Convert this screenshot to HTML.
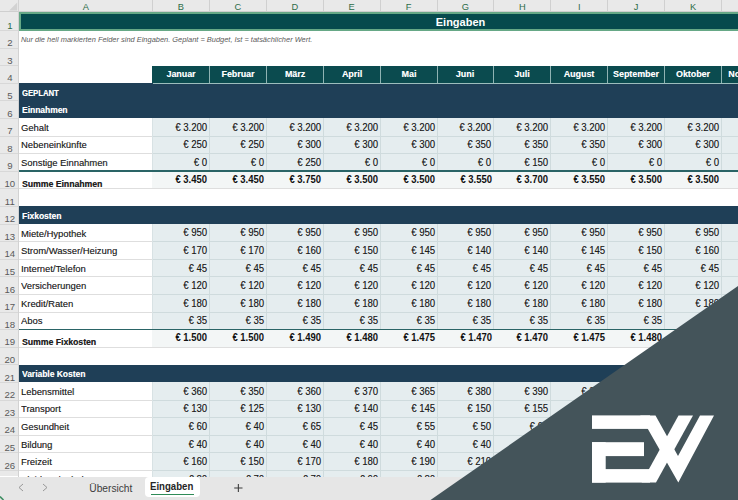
<!DOCTYPE html>
<html><head><meta charset="utf-8"><style>
html,body{margin:0;padding:0;width:738px;height:500px;overflow:hidden;background:#fff}
body{position:relative;font-family:"Liberation Sans",sans-serif}
body>div,body>svg{position:absolute}
</style></head><body>
<div style="left:0.00px;top:0.00px;width:738.00px;height:12.00px;background:#E9E9E9;"></div>
<div style="left:0.00px;top:0.00px;width:19.00px;height:476.00px;background:#E9E9E9;"></div>
<div style="left:19.00px;top:12.00px;width:719.00px;height:19.00px;background:#064A4D;"></div>
<div style="left:152.00px;top:66.00px;width:586.00px;height:17.00px;background:#0B4B4F;"></div>
<div style="left:19.00px;top:83.00px;width:719.00px;height:18.00px;background:#1F3F57;"></div>
<div style="left:19.00px;top:101.00px;width:719.00px;height:17.00px;background:#1F3F57;"></div>
<div style="left:19.00px;top:206.00px;width:719.00px;height:18.00px;background:#1F3F57;"></div>
<div style="left:19.00px;top:365.00px;width:719.00px;height:17.00px;background:#1F3F57;"></div>
<div style="left:152.00px;top:118.00px;width:586.00px;height:18.00px;background:#E5EDEF;"></div>
<div style="left:152.00px;top:136.00px;width:586.00px;height:18.00px;background:#E5EDEF;"></div>
<div style="left:152.00px;top:154.00px;width:586.00px;height:17.00px;background:#E5EDEF;"></div>
<div style="left:152.00px;top:171.00px;width:586.00px;height:18.00px;background:#F3F6F6;"></div>
<div style="left:152.00px;top:224.00px;width:586.00px;height:18.00px;background:#E5EDEF;"></div>
<div style="left:152.00px;top:242.00px;width:586.00px;height:17.00px;background:#E5EDEF;"></div>
<div style="left:152.00px;top:259.00px;width:586.00px;height:18.00px;background:#E5EDEF;"></div>
<div style="left:152.00px;top:277.00px;width:586.00px;height:17.00px;background:#E5EDEF;"></div>
<div style="left:152.00px;top:294.00px;width:586.00px;height:18.00px;background:#E5EDEF;"></div>
<div style="left:152.00px;top:312.00px;width:586.00px;height:18.00px;background:#E5EDEF;"></div>
<div style="left:152.00px;top:330.00px;width:586.00px;height:17.00px;background:#F3F6F6;"></div>
<div style="left:152.00px;top:382.00px;width:586.00px;height:18.00px;background:#E5EDEF;"></div>
<div style="left:152.00px;top:400.00px;width:586.00px;height:18.00px;background:#E5EDEF;"></div>
<div style="left:152.00px;top:418.00px;width:586.00px;height:17.00px;background:#E5EDEF;"></div>
<div style="left:152.00px;top:435.00px;width:586.00px;height:18.00px;background:#E5EDEF;"></div>
<div style="left:152.00px;top:453.00px;width:586.00px;height:17.00px;background:#E5EDEF;"></div>
<div style="left:152.00px;top:470.00px;width:586.00px;height:18.00px;background:#E5EDEF;"></div>
<div style="left:152.00px;top:0.00px;width:1.00px;height:12.00px;background:#D0D0D0;"></div>
<div style="left:208.90px;top:0.00px;width:1.00px;height:12.00px;background:#D0D0D0;"></div>
<div style="left:265.80px;top:0.00px;width:1.00px;height:12.00px;background:#D0D0D0;"></div>
<div style="left:322.70px;top:0.00px;width:1.00px;height:12.00px;background:#D0D0D0;"></div>
<div style="left:379.60px;top:0.00px;width:1.00px;height:12.00px;background:#D0D0D0;"></div>
<div style="left:436.50px;top:0.00px;width:1.00px;height:12.00px;background:#D0D0D0;"></div>
<div style="left:493.40px;top:0.00px;width:1.00px;height:12.00px;background:#D0D0D0;"></div>
<div style="left:550.30px;top:0.00px;width:1.00px;height:12.00px;background:#D0D0D0;"></div>
<div style="left:607.20px;top:0.00px;width:1.00px;height:12.00px;background:#D0D0D0;"></div>
<div style="left:664.10px;top:0.00px;width:1.00px;height:12.00px;background:#D0D0D0;"></div>
<div style="left:721.00px;top:0.00px;width:1.00px;height:12.00px;background:#D0D0D0;"></div>
<div style="left:777.90px;top:0.00px;width:1.00px;height:12.00px;background:#D0D0D0;"></div>
<div style="left:0.00px;top:11.40px;width:738.00px;height:1.00px;background:#CFCFCF;"></div>
<div style="left:18.00px;top:0.00px;width:1.00px;height:476.50px;background:#D2D2D2;"></div>
<div style="left:0.00px;top:29.90px;width:18.40px;height:0.80px;background:#D8D8D8;"></div>
<div style="left:0.00px;top:47.50px;width:18.40px;height:0.80px;background:#D8D8D8;"></div>
<div style="left:0.00px;top:65.10px;width:18.40px;height:0.80px;background:#D8D8D8;"></div>
<div style="left:0.00px;top:82.70px;width:18.40px;height:0.80px;background:#D8D8D8;"></div>
<div style="left:0.00px;top:100.30px;width:18.40px;height:0.80px;background:#D8D8D8;"></div>
<div style="left:0.00px;top:117.90px;width:18.40px;height:0.80px;background:#D8D8D8;"></div>
<div style="left:0.00px;top:135.50px;width:18.40px;height:0.80px;background:#D8D8D8;"></div>
<div style="left:0.00px;top:153.10px;width:18.40px;height:0.80px;background:#D8D8D8;"></div>
<div style="left:0.00px;top:170.70px;width:18.40px;height:0.80px;background:#D8D8D8;"></div>
<div style="left:0.00px;top:188.30px;width:18.40px;height:0.80px;background:#D8D8D8;"></div>
<div style="left:0.00px;top:205.90px;width:18.40px;height:0.80px;background:#D8D8D8;"></div>
<div style="left:0.00px;top:223.50px;width:18.40px;height:0.80px;background:#D8D8D8;"></div>
<div style="left:0.00px;top:241.10px;width:18.40px;height:0.80px;background:#D8D8D8;"></div>
<div style="left:0.00px;top:258.70px;width:18.40px;height:0.80px;background:#D8D8D8;"></div>
<div style="left:0.00px;top:276.30px;width:18.40px;height:0.80px;background:#D8D8D8;"></div>
<div style="left:0.00px;top:293.90px;width:18.40px;height:0.80px;background:#D8D8D8;"></div>
<div style="left:0.00px;top:311.50px;width:18.40px;height:0.80px;background:#D8D8D8;"></div>
<div style="left:0.00px;top:329.10px;width:18.40px;height:0.80px;background:#D8D8D8;"></div>
<div style="left:0.00px;top:346.70px;width:18.40px;height:0.80px;background:#D8D8D8;"></div>
<div style="left:0.00px;top:364.30px;width:18.40px;height:0.80px;background:#D8D8D8;"></div>
<div style="left:0.00px;top:381.90px;width:18.40px;height:0.80px;background:#D8D8D8;"></div>
<div style="left:0.00px;top:399.50px;width:18.40px;height:0.80px;background:#D8D8D8;"></div>
<div style="left:0.00px;top:417.10px;width:18.40px;height:0.80px;background:#D8D8D8;"></div>
<div style="left:0.00px;top:434.70px;width:18.40px;height:0.80px;background:#D8D8D8;"></div>
<div style="left:0.00px;top:452.30px;width:18.40px;height:0.80px;background:#D8D8D8;"></div>
<div style="left:0.00px;top:469.90px;width:18.40px;height:0.80px;background:#D8D8D8;"></div>
<div style="left:0.00px;top:487.50px;width:18.40px;height:0.80px;background:#D8D8D8;"></div>
<div style="left:208.90px;top:65.60px;width:1.00px;height:17.60px;background:#8FB3B3;"></div>
<div style="left:265.80px;top:65.60px;width:1.00px;height:17.60px;background:#8FB3B3;"></div>
<div style="left:322.70px;top:65.60px;width:1.00px;height:17.60px;background:#8FB3B3;"></div>
<div style="left:379.60px;top:65.60px;width:1.00px;height:17.60px;background:#8FB3B3;"></div>
<div style="left:436.50px;top:65.60px;width:1.00px;height:17.60px;background:#8FB3B3;"></div>
<div style="left:493.40px;top:65.60px;width:1.00px;height:17.60px;background:#8FB3B3;"></div>
<div style="left:550.30px;top:65.60px;width:1.00px;height:17.60px;background:#8FB3B3;"></div>
<div style="left:607.20px;top:65.60px;width:1.00px;height:17.60px;background:#8FB3B3;"></div>
<div style="left:664.10px;top:65.60px;width:1.00px;height:17.60px;background:#8FB3B3;"></div>
<div style="left:721.00px;top:65.60px;width:1.00px;height:17.60px;background:#8FB3B3;"></div>
<div style="left:777.90px;top:65.60px;width:1.00px;height:17.60px;background:#8FB3B3;"></div>
<div style="left:152.50px;top:82.60px;width:585.50px;height:1.00px;background:#9DBDBD;"></div>
<div style="left:19.40px;top:135.50px;width:133.10px;height:1.00px;background:#DEDEDE;"></div>
<div style="left:152.50px;top:135.50px;width:585.50px;height:1.00px;background:#CFDBDD;"></div>
<div style="left:208.90px;top:118.40px;width:1.00px;height:17.60px;background:#CFDBDD;"></div>
<div style="left:265.80px;top:118.40px;width:1.00px;height:17.60px;background:#CFDBDD;"></div>
<div style="left:322.70px;top:118.40px;width:1.00px;height:17.60px;background:#CFDBDD;"></div>
<div style="left:379.60px;top:118.40px;width:1.00px;height:17.60px;background:#CFDBDD;"></div>
<div style="left:436.50px;top:118.40px;width:1.00px;height:17.60px;background:#CFDBDD;"></div>
<div style="left:493.40px;top:118.40px;width:1.00px;height:17.60px;background:#CFDBDD;"></div>
<div style="left:550.30px;top:118.40px;width:1.00px;height:17.60px;background:#CFDBDD;"></div>
<div style="left:607.20px;top:118.40px;width:1.00px;height:17.60px;background:#CFDBDD;"></div>
<div style="left:664.10px;top:118.40px;width:1.00px;height:17.60px;background:#CFDBDD;"></div>
<div style="left:721.00px;top:118.40px;width:1.00px;height:17.60px;background:#CFDBDD;"></div>
<div style="left:777.90px;top:118.40px;width:1.00px;height:17.60px;background:#CFDBDD;"></div>
<div style="left:152.00px;top:118.40px;width:1.00px;height:17.60px;background:#D8E2E4;"></div>
<div style="left:19.40px;top:153.10px;width:133.10px;height:1.00px;background:#DEDEDE;"></div>
<div style="left:152.50px;top:153.10px;width:585.50px;height:1.00px;background:#CFDBDD;"></div>
<div style="left:208.90px;top:136.00px;width:1.00px;height:17.60px;background:#CFDBDD;"></div>
<div style="left:265.80px;top:136.00px;width:1.00px;height:17.60px;background:#CFDBDD;"></div>
<div style="left:322.70px;top:136.00px;width:1.00px;height:17.60px;background:#CFDBDD;"></div>
<div style="left:379.60px;top:136.00px;width:1.00px;height:17.60px;background:#CFDBDD;"></div>
<div style="left:436.50px;top:136.00px;width:1.00px;height:17.60px;background:#CFDBDD;"></div>
<div style="left:493.40px;top:136.00px;width:1.00px;height:17.60px;background:#CFDBDD;"></div>
<div style="left:550.30px;top:136.00px;width:1.00px;height:17.60px;background:#CFDBDD;"></div>
<div style="left:607.20px;top:136.00px;width:1.00px;height:17.60px;background:#CFDBDD;"></div>
<div style="left:664.10px;top:136.00px;width:1.00px;height:17.60px;background:#CFDBDD;"></div>
<div style="left:721.00px;top:136.00px;width:1.00px;height:17.60px;background:#CFDBDD;"></div>
<div style="left:777.90px;top:136.00px;width:1.00px;height:17.60px;background:#CFDBDD;"></div>
<div style="left:152.00px;top:136.00px;width:1.00px;height:17.60px;background:#D8E2E4;"></div>
<div style="left:19.40px;top:170.70px;width:133.10px;height:1.00px;background:#DEDEDE;"></div>
<div style="left:152.50px;top:170.70px;width:585.50px;height:1.00px;background:#CFDBDD;"></div>
<div style="left:208.90px;top:153.60px;width:1.00px;height:17.60px;background:#CFDBDD;"></div>
<div style="left:265.80px;top:153.60px;width:1.00px;height:17.60px;background:#CFDBDD;"></div>
<div style="left:322.70px;top:153.60px;width:1.00px;height:17.60px;background:#CFDBDD;"></div>
<div style="left:379.60px;top:153.60px;width:1.00px;height:17.60px;background:#CFDBDD;"></div>
<div style="left:436.50px;top:153.60px;width:1.00px;height:17.60px;background:#CFDBDD;"></div>
<div style="left:493.40px;top:153.60px;width:1.00px;height:17.60px;background:#CFDBDD;"></div>
<div style="left:550.30px;top:153.60px;width:1.00px;height:17.60px;background:#CFDBDD;"></div>
<div style="left:607.20px;top:153.60px;width:1.00px;height:17.60px;background:#CFDBDD;"></div>
<div style="left:664.10px;top:153.60px;width:1.00px;height:17.60px;background:#CFDBDD;"></div>
<div style="left:721.00px;top:153.60px;width:1.00px;height:17.60px;background:#CFDBDD;"></div>
<div style="left:777.90px;top:153.60px;width:1.00px;height:17.60px;background:#CFDBDD;"></div>
<div style="left:152.00px;top:153.60px;width:1.00px;height:17.60px;background:#D8E2E4;"></div>
<div style="left:19.40px;top:170.40px;width:718.60px;height:1.60px;background:#2A6466;"></div>
<div style="left:19.40px;top:188.20px;width:718.60px;height:1.20px;background:#DEDEDE;"></div>
<div style="left:19.40px;top:241.10px;width:133.10px;height:1.00px;background:#DEDEDE;"></div>
<div style="left:152.50px;top:241.10px;width:585.50px;height:1.00px;background:#CFDBDD;"></div>
<div style="left:208.90px;top:224.00px;width:1.00px;height:17.60px;background:#CFDBDD;"></div>
<div style="left:265.80px;top:224.00px;width:1.00px;height:17.60px;background:#CFDBDD;"></div>
<div style="left:322.70px;top:224.00px;width:1.00px;height:17.60px;background:#CFDBDD;"></div>
<div style="left:379.60px;top:224.00px;width:1.00px;height:17.60px;background:#CFDBDD;"></div>
<div style="left:436.50px;top:224.00px;width:1.00px;height:17.60px;background:#CFDBDD;"></div>
<div style="left:493.40px;top:224.00px;width:1.00px;height:17.60px;background:#CFDBDD;"></div>
<div style="left:550.30px;top:224.00px;width:1.00px;height:17.60px;background:#CFDBDD;"></div>
<div style="left:607.20px;top:224.00px;width:1.00px;height:17.60px;background:#CFDBDD;"></div>
<div style="left:664.10px;top:224.00px;width:1.00px;height:17.60px;background:#CFDBDD;"></div>
<div style="left:721.00px;top:224.00px;width:1.00px;height:17.60px;background:#CFDBDD;"></div>
<div style="left:777.90px;top:224.00px;width:1.00px;height:17.60px;background:#CFDBDD;"></div>
<div style="left:152.00px;top:224.00px;width:1.00px;height:17.60px;background:#D8E2E4;"></div>
<div style="left:19.40px;top:258.70px;width:133.10px;height:1.00px;background:#DEDEDE;"></div>
<div style="left:152.50px;top:258.70px;width:585.50px;height:1.00px;background:#CFDBDD;"></div>
<div style="left:208.90px;top:241.60px;width:1.00px;height:17.60px;background:#CFDBDD;"></div>
<div style="left:265.80px;top:241.60px;width:1.00px;height:17.60px;background:#CFDBDD;"></div>
<div style="left:322.70px;top:241.60px;width:1.00px;height:17.60px;background:#CFDBDD;"></div>
<div style="left:379.60px;top:241.60px;width:1.00px;height:17.60px;background:#CFDBDD;"></div>
<div style="left:436.50px;top:241.60px;width:1.00px;height:17.60px;background:#CFDBDD;"></div>
<div style="left:493.40px;top:241.60px;width:1.00px;height:17.60px;background:#CFDBDD;"></div>
<div style="left:550.30px;top:241.60px;width:1.00px;height:17.60px;background:#CFDBDD;"></div>
<div style="left:607.20px;top:241.60px;width:1.00px;height:17.60px;background:#CFDBDD;"></div>
<div style="left:664.10px;top:241.60px;width:1.00px;height:17.60px;background:#CFDBDD;"></div>
<div style="left:721.00px;top:241.60px;width:1.00px;height:17.60px;background:#CFDBDD;"></div>
<div style="left:777.90px;top:241.60px;width:1.00px;height:17.60px;background:#CFDBDD;"></div>
<div style="left:152.00px;top:241.60px;width:1.00px;height:17.60px;background:#D8E2E4;"></div>
<div style="left:19.40px;top:276.30px;width:133.10px;height:1.00px;background:#DEDEDE;"></div>
<div style="left:152.50px;top:276.30px;width:585.50px;height:1.00px;background:#CFDBDD;"></div>
<div style="left:208.90px;top:259.20px;width:1.00px;height:17.60px;background:#CFDBDD;"></div>
<div style="left:265.80px;top:259.20px;width:1.00px;height:17.60px;background:#CFDBDD;"></div>
<div style="left:322.70px;top:259.20px;width:1.00px;height:17.60px;background:#CFDBDD;"></div>
<div style="left:379.60px;top:259.20px;width:1.00px;height:17.60px;background:#CFDBDD;"></div>
<div style="left:436.50px;top:259.20px;width:1.00px;height:17.60px;background:#CFDBDD;"></div>
<div style="left:493.40px;top:259.20px;width:1.00px;height:17.60px;background:#CFDBDD;"></div>
<div style="left:550.30px;top:259.20px;width:1.00px;height:17.60px;background:#CFDBDD;"></div>
<div style="left:607.20px;top:259.20px;width:1.00px;height:17.60px;background:#CFDBDD;"></div>
<div style="left:664.10px;top:259.20px;width:1.00px;height:17.60px;background:#CFDBDD;"></div>
<div style="left:721.00px;top:259.20px;width:1.00px;height:17.60px;background:#CFDBDD;"></div>
<div style="left:777.90px;top:259.20px;width:1.00px;height:17.60px;background:#CFDBDD;"></div>
<div style="left:152.00px;top:259.20px;width:1.00px;height:17.60px;background:#D8E2E4;"></div>
<div style="left:19.40px;top:293.90px;width:133.10px;height:1.00px;background:#DEDEDE;"></div>
<div style="left:152.50px;top:293.90px;width:585.50px;height:1.00px;background:#CFDBDD;"></div>
<div style="left:208.90px;top:276.80px;width:1.00px;height:17.60px;background:#CFDBDD;"></div>
<div style="left:265.80px;top:276.80px;width:1.00px;height:17.60px;background:#CFDBDD;"></div>
<div style="left:322.70px;top:276.80px;width:1.00px;height:17.60px;background:#CFDBDD;"></div>
<div style="left:379.60px;top:276.80px;width:1.00px;height:17.60px;background:#CFDBDD;"></div>
<div style="left:436.50px;top:276.80px;width:1.00px;height:17.60px;background:#CFDBDD;"></div>
<div style="left:493.40px;top:276.80px;width:1.00px;height:17.60px;background:#CFDBDD;"></div>
<div style="left:550.30px;top:276.80px;width:1.00px;height:17.60px;background:#CFDBDD;"></div>
<div style="left:607.20px;top:276.80px;width:1.00px;height:17.60px;background:#CFDBDD;"></div>
<div style="left:664.10px;top:276.80px;width:1.00px;height:17.60px;background:#CFDBDD;"></div>
<div style="left:721.00px;top:276.80px;width:1.00px;height:17.60px;background:#CFDBDD;"></div>
<div style="left:777.90px;top:276.80px;width:1.00px;height:17.60px;background:#CFDBDD;"></div>
<div style="left:152.00px;top:276.80px;width:1.00px;height:17.60px;background:#D8E2E4;"></div>
<div style="left:19.40px;top:311.50px;width:133.10px;height:1.00px;background:#DEDEDE;"></div>
<div style="left:152.50px;top:311.50px;width:585.50px;height:1.00px;background:#CFDBDD;"></div>
<div style="left:208.90px;top:294.40px;width:1.00px;height:17.60px;background:#CFDBDD;"></div>
<div style="left:265.80px;top:294.40px;width:1.00px;height:17.60px;background:#CFDBDD;"></div>
<div style="left:322.70px;top:294.40px;width:1.00px;height:17.60px;background:#CFDBDD;"></div>
<div style="left:379.60px;top:294.40px;width:1.00px;height:17.60px;background:#CFDBDD;"></div>
<div style="left:436.50px;top:294.40px;width:1.00px;height:17.60px;background:#CFDBDD;"></div>
<div style="left:493.40px;top:294.40px;width:1.00px;height:17.60px;background:#CFDBDD;"></div>
<div style="left:550.30px;top:294.40px;width:1.00px;height:17.60px;background:#CFDBDD;"></div>
<div style="left:607.20px;top:294.40px;width:1.00px;height:17.60px;background:#CFDBDD;"></div>
<div style="left:664.10px;top:294.40px;width:1.00px;height:17.60px;background:#CFDBDD;"></div>
<div style="left:721.00px;top:294.40px;width:1.00px;height:17.60px;background:#CFDBDD;"></div>
<div style="left:777.90px;top:294.40px;width:1.00px;height:17.60px;background:#CFDBDD;"></div>
<div style="left:152.00px;top:294.40px;width:1.00px;height:17.60px;background:#D8E2E4;"></div>
<div style="left:19.40px;top:329.10px;width:133.10px;height:1.00px;background:#DEDEDE;"></div>
<div style="left:152.50px;top:329.10px;width:585.50px;height:1.00px;background:#CFDBDD;"></div>
<div style="left:208.90px;top:312.00px;width:1.00px;height:17.60px;background:#CFDBDD;"></div>
<div style="left:265.80px;top:312.00px;width:1.00px;height:17.60px;background:#CFDBDD;"></div>
<div style="left:322.70px;top:312.00px;width:1.00px;height:17.60px;background:#CFDBDD;"></div>
<div style="left:379.60px;top:312.00px;width:1.00px;height:17.60px;background:#CFDBDD;"></div>
<div style="left:436.50px;top:312.00px;width:1.00px;height:17.60px;background:#CFDBDD;"></div>
<div style="left:493.40px;top:312.00px;width:1.00px;height:17.60px;background:#CFDBDD;"></div>
<div style="left:550.30px;top:312.00px;width:1.00px;height:17.60px;background:#CFDBDD;"></div>
<div style="left:607.20px;top:312.00px;width:1.00px;height:17.60px;background:#CFDBDD;"></div>
<div style="left:664.10px;top:312.00px;width:1.00px;height:17.60px;background:#CFDBDD;"></div>
<div style="left:721.00px;top:312.00px;width:1.00px;height:17.60px;background:#CFDBDD;"></div>
<div style="left:777.90px;top:312.00px;width:1.00px;height:17.60px;background:#CFDBDD;"></div>
<div style="left:152.00px;top:312.00px;width:1.00px;height:17.60px;background:#D8E2E4;"></div>
<div style="left:19.40px;top:328.80px;width:718.60px;height:1.60px;background:#2A6466;"></div>
<div style="left:19.40px;top:346.60px;width:718.60px;height:1.20px;background:#DEDEDE;"></div>
<div style="left:19.40px;top:399.50px;width:133.10px;height:1.00px;background:#DEDEDE;"></div>
<div style="left:152.50px;top:399.50px;width:585.50px;height:1.00px;background:#CFDBDD;"></div>
<div style="left:208.90px;top:382.40px;width:1.00px;height:17.60px;background:#CFDBDD;"></div>
<div style="left:265.80px;top:382.40px;width:1.00px;height:17.60px;background:#CFDBDD;"></div>
<div style="left:322.70px;top:382.40px;width:1.00px;height:17.60px;background:#CFDBDD;"></div>
<div style="left:379.60px;top:382.40px;width:1.00px;height:17.60px;background:#CFDBDD;"></div>
<div style="left:436.50px;top:382.40px;width:1.00px;height:17.60px;background:#CFDBDD;"></div>
<div style="left:493.40px;top:382.40px;width:1.00px;height:17.60px;background:#CFDBDD;"></div>
<div style="left:550.30px;top:382.40px;width:1.00px;height:17.60px;background:#CFDBDD;"></div>
<div style="left:607.20px;top:382.40px;width:1.00px;height:17.60px;background:#CFDBDD;"></div>
<div style="left:664.10px;top:382.40px;width:1.00px;height:17.60px;background:#CFDBDD;"></div>
<div style="left:721.00px;top:382.40px;width:1.00px;height:17.60px;background:#CFDBDD;"></div>
<div style="left:777.90px;top:382.40px;width:1.00px;height:17.60px;background:#CFDBDD;"></div>
<div style="left:152.00px;top:382.40px;width:1.00px;height:17.60px;background:#D8E2E4;"></div>
<div style="left:19.40px;top:417.10px;width:133.10px;height:1.00px;background:#DEDEDE;"></div>
<div style="left:152.50px;top:417.10px;width:585.50px;height:1.00px;background:#CFDBDD;"></div>
<div style="left:208.90px;top:400.00px;width:1.00px;height:17.60px;background:#CFDBDD;"></div>
<div style="left:265.80px;top:400.00px;width:1.00px;height:17.60px;background:#CFDBDD;"></div>
<div style="left:322.70px;top:400.00px;width:1.00px;height:17.60px;background:#CFDBDD;"></div>
<div style="left:379.60px;top:400.00px;width:1.00px;height:17.60px;background:#CFDBDD;"></div>
<div style="left:436.50px;top:400.00px;width:1.00px;height:17.60px;background:#CFDBDD;"></div>
<div style="left:493.40px;top:400.00px;width:1.00px;height:17.60px;background:#CFDBDD;"></div>
<div style="left:550.30px;top:400.00px;width:1.00px;height:17.60px;background:#CFDBDD;"></div>
<div style="left:607.20px;top:400.00px;width:1.00px;height:17.60px;background:#CFDBDD;"></div>
<div style="left:664.10px;top:400.00px;width:1.00px;height:17.60px;background:#CFDBDD;"></div>
<div style="left:721.00px;top:400.00px;width:1.00px;height:17.60px;background:#CFDBDD;"></div>
<div style="left:777.90px;top:400.00px;width:1.00px;height:17.60px;background:#CFDBDD;"></div>
<div style="left:152.00px;top:400.00px;width:1.00px;height:17.60px;background:#D8E2E4;"></div>
<div style="left:19.40px;top:434.70px;width:133.10px;height:1.00px;background:#DEDEDE;"></div>
<div style="left:152.50px;top:434.70px;width:585.50px;height:1.00px;background:#CFDBDD;"></div>
<div style="left:208.90px;top:417.60px;width:1.00px;height:17.60px;background:#CFDBDD;"></div>
<div style="left:265.80px;top:417.60px;width:1.00px;height:17.60px;background:#CFDBDD;"></div>
<div style="left:322.70px;top:417.60px;width:1.00px;height:17.60px;background:#CFDBDD;"></div>
<div style="left:379.60px;top:417.60px;width:1.00px;height:17.60px;background:#CFDBDD;"></div>
<div style="left:436.50px;top:417.60px;width:1.00px;height:17.60px;background:#CFDBDD;"></div>
<div style="left:493.40px;top:417.60px;width:1.00px;height:17.60px;background:#CFDBDD;"></div>
<div style="left:550.30px;top:417.60px;width:1.00px;height:17.60px;background:#CFDBDD;"></div>
<div style="left:607.20px;top:417.60px;width:1.00px;height:17.60px;background:#CFDBDD;"></div>
<div style="left:664.10px;top:417.60px;width:1.00px;height:17.60px;background:#CFDBDD;"></div>
<div style="left:721.00px;top:417.60px;width:1.00px;height:17.60px;background:#CFDBDD;"></div>
<div style="left:777.90px;top:417.60px;width:1.00px;height:17.60px;background:#CFDBDD;"></div>
<div style="left:152.00px;top:417.60px;width:1.00px;height:17.60px;background:#D8E2E4;"></div>
<div style="left:19.40px;top:452.30px;width:133.10px;height:1.00px;background:#DEDEDE;"></div>
<div style="left:152.50px;top:452.30px;width:585.50px;height:1.00px;background:#CFDBDD;"></div>
<div style="left:208.90px;top:435.20px;width:1.00px;height:17.60px;background:#CFDBDD;"></div>
<div style="left:265.80px;top:435.20px;width:1.00px;height:17.60px;background:#CFDBDD;"></div>
<div style="left:322.70px;top:435.20px;width:1.00px;height:17.60px;background:#CFDBDD;"></div>
<div style="left:379.60px;top:435.20px;width:1.00px;height:17.60px;background:#CFDBDD;"></div>
<div style="left:436.50px;top:435.20px;width:1.00px;height:17.60px;background:#CFDBDD;"></div>
<div style="left:493.40px;top:435.20px;width:1.00px;height:17.60px;background:#CFDBDD;"></div>
<div style="left:550.30px;top:435.20px;width:1.00px;height:17.60px;background:#CFDBDD;"></div>
<div style="left:607.20px;top:435.20px;width:1.00px;height:17.60px;background:#CFDBDD;"></div>
<div style="left:664.10px;top:435.20px;width:1.00px;height:17.60px;background:#CFDBDD;"></div>
<div style="left:721.00px;top:435.20px;width:1.00px;height:17.60px;background:#CFDBDD;"></div>
<div style="left:777.90px;top:435.20px;width:1.00px;height:17.60px;background:#CFDBDD;"></div>
<div style="left:152.00px;top:435.20px;width:1.00px;height:17.60px;background:#D8E2E4;"></div>
<div style="left:19.40px;top:469.90px;width:133.10px;height:1.00px;background:#DEDEDE;"></div>
<div style="left:152.50px;top:469.90px;width:585.50px;height:1.00px;background:#CFDBDD;"></div>
<div style="left:208.90px;top:452.80px;width:1.00px;height:17.60px;background:#CFDBDD;"></div>
<div style="left:265.80px;top:452.80px;width:1.00px;height:17.60px;background:#CFDBDD;"></div>
<div style="left:322.70px;top:452.80px;width:1.00px;height:17.60px;background:#CFDBDD;"></div>
<div style="left:379.60px;top:452.80px;width:1.00px;height:17.60px;background:#CFDBDD;"></div>
<div style="left:436.50px;top:452.80px;width:1.00px;height:17.60px;background:#CFDBDD;"></div>
<div style="left:493.40px;top:452.80px;width:1.00px;height:17.60px;background:#CFDBDD;"></div>
<div style="left:550.30px;top:452.80px;width:1.00px;height:17.60px;background:#CFDBDD;"></div>
<div style="left:607.20px;top:452.80px;width:1.00px;height:17.60px;background:#CFDBDD;"></div>
<div style="left:664.10px;top:452.80px;width:1.00px;height:17.60px;background:#CFDBDD;"></div>
<div style="left:721.00px;top:452.80px;width:1.00px;height:17.60px;background:#CFDBDD;"></div>
<div style="left:777.90px;top:452.80px;width:1.00px;height:17.60px;background:#CFDBDD;"></div>
<div style="left:152.00px;top:452.80px;width:1.00px;height:17.60px;background:#D8E2E4;"></div>
<div style="left:19.40px;top:487.50px;width:133.10px;height:1.00px;background:#DEDEDE;"></div>
<div style="left:152.50px;top:487.50px;width:585.50px;height:1.00px;background:#CFDBDD;"></div>
<div style="left:208.90px;top:470.40px;width:1.00px;height:17.60px;background:#CFDBDD;"></div>
<div style="left:265.80px;top:470.40px;width:1.00px;height:17.60px;background:#CFDBDD;"></div>
<div style="left:322.70px;top:470.40px;width:1.00px;height:17.60px;background:#CFDBDD;"></div>
<div style="left:379.60px;top:470.40px;width:1.00px;height:17.60px;background:#CFDBDD;"></div>
<div style="left:436.50px;top:470.40px;width:1.00px;height:17.60px;background:#CFDBDD;"></div>
<div style="left:493.40px;top:470.40px;width:1.00px;height:17.60px;background:#CFDBDD;"></div>
<div style="left:550.30px;top:470.40px;width:1.00px;height:17.60px;background:#CFDBDD;"></div>
<div style="left:607.20px;top:470.40px;width:1.00px;height:17.60px;background:#CFDBDD;"></div>
<div style="left:664.10px;top:470.40px;width:1.00px;height:17.60px;background:#CFDBDD;"></div>
<div style="left:721.00px;top:470.40px;width:1.00px;height:17.60px;background:#CFDBDD;"></div>
<div style="left:777.90px;top:470.40px;width:1.00px;height:17.60px;background:#CFDBDD;"></div>
<div style="left:152.00px;top:470.40px;width:1.00px;height:17.60px;background:#D8E2E4;"></div>
<div style="left:-64.05px;width:300px;text-align:center;top:-3.00px;line-height:20px;font-size:9.3px;font-weight:400;color:#2C6C48;white-space:nowrap;">A</div>
<div style="left:30.95px;width:300px;text-align:center;top:-3.00px;line-height:20px;font-size:9.3px;font-weight:400;color:#2C6C48;white-space:nowrap;">B</div>
<div style="left:87.85px;width:300px;text-align:center;top:-3.00px;line-height:20px;font-size:9.3px;font-weight:400;color:#2C6C48;white-space:nowrap;">C</div>
<div style="left:144.75px;width:300px;text-align:center;top:-3.00px;line-height:20px;font-size:9.3px;font-weight:400;color:#2C6C48;white-space:nowrap;">D</div>
<div style="left:201.65px;width:300px;text-align:center;top:-3.00px;line-height:20px;font-size:9.3px;font-weight:400;color:#2C6C48;white-space:nowrap;">E</div>
<div style="left:258.55px;width:300px;text-align:center;top:-3.00px;line-height:20px;font-size:9.3px;font-weight:400;color:#2C6C48;white-space:nowrap;">F</div>
<div style="left:315.45px;width:300px;text-align:center;top:-3.00px;line-height:20px;font-size:9.3px;font-weight:400;color:#2C6C48;white-space:nowrap;">G</div>
<div style="left:372.35px;width:300px;text-align:center;top:-3.00px;line-height:20px;font-size:9.3px;font-weight:400;color:#2C6C48;white-space:nowrap;">H</div>
<div style="left:429.25px;width:300px;text-align:center;top:-3.00px;line-height:20px;font-size:9.3px;font-weight:400;color:#2C6C48;white-space:nowrap;">I</div>
<div style="left:486.15px;width:300px;text-align:center;top:-3.00px;line-height:20px;font-size:9.3px;font-weight:400;color:#2C6C48;white-space:nowrap;">J</div>
<div style="left:543.05px;width:300px;text-align:center;top:-3.00px;line-height:20px;font-size:9.3px;font-weight:400;color:#2C6C48;white-space:nowrap;">K</div>
<div style="left:599.95px;width:300px;text-align:center;top:-3.00px;line-height:20px;font-size:9.3px;font-weight:400;color:#2C6C48;white-space:nowrap;">L</div>
<div style="left:-140.20px;width:300px;text-align:center;top:16.00px;line-height:20px;font-size:9.6px;font-weight:400;color:#2C6C48;white-space:nowrap;">1</div>
<div style="left:-140.20px;width:300px;text-align:center;top:33.00px;line-height:20px;font-size:9.6px;font-weight:400;color:#5A5A5A;white-space:nowrap;">2</div>
<div style="left:-140.20px;width:300px;text-align:center;top:51.00px;line-height:20px;font-size:9.6px;font-weight:400;color:#5A5A5A;white-space:nowrap;">3</div>
<div style="left:-140.20px;width:300px;text-align:center;top:68.00px;line-height:20px;font-size:9.6px;font-weight:400;color:#5A5A5A;white-space:nowrap;">4</div>
<div style="left:-140.20px;width:300px;text-align:center;top:86.00px;line-height:20px;font-size:9.6px;font-weight:400;color:#5A5A5A;white-space:nowrap;">5</div>
<div style="left:-140.20px;width:300px;text-align:center;top:104.00px;line-height:20px;font-size:9.6px;font-weight:400;color:#5A5A5A;white-space:nowrap;">6</div>
<div style="left:-140.20px;width:300px;text-align:center;top:121.00px;line-height:20px;font-size:9.6px;font-weight:400;color:#5A5A5A;white-space:nowrap;">7</div>
<div style="left:-140.20px;width:300px;text-align:center;top:139.00px;line-height:20px;font-size:9.6px;font-weight:400;color:#5A5A5A;white-space:nowrap;">8</div>
<div style="left:-140.20px;width:300px;text-align:center;top:156.00px;line-height:20px;font-size:9.6px;font-weight:400;color:#5A5A5A;white-space:nowrap;">9</div>
<div style="left:-140.20px;width:300px;text-align:center;top:174.00px;line-height:20px;font-size:9.6px;font-weight:400;color:#5A5A5A;white-space:nowrap;">10</div>
<div style="left:-140.20px;width:300px;text-align:center;top:192.00px;line-height:20px;font-size:9.6px;font-weight:400;color:#5A5A5A;white-space:nowrap;">11</div>
<div style="left:-140.20px;width:300px;text-align:center;top:209.00px;line-height:20px;font-size:9.6px;font-weight:400;color:#5A5A5A;white-space:nowrap;">12</div>
<div style="left:-140.20px;width:300px;text-align:center;top:227.00px;line-height:20px;font-size:9.6px;font-weight:400;color:#5A5A5A;white-space:nowrap;">13</div>
<div style="left:-140.20px;width:300px;text-align:center;top:244.00px;line-height:20px;font-size:9.6px;font-weight:400;color:#5A5A5A;white-space:nowrap;">14</div>
<div style="left:-140.20px;width:300px;text-align:center;top:262.00px;line-height:20px;font-size:9.6px;font-weight:400;color:#5A5A5A;white-space:nowrap;">15</div>
<div style="left:-140.20px;width:300px;text-align:center;top:280.00px;line-height:20px;font-size:9.6px;font-weight:400;color:#5A5A5A;white-space:nowrap;">16</div>
<div style="left:-140.20px;width:300px;text-align:center;top:297.00px;line-height:20px;font-size:9.6px;font-weight:400;color:#5A5A5A;white-space:nowrap;">17</div>
<div style="left:-140.20px;width:300px;text-align:center;top:315.00px;line-height:20px;font-size:9.6px;font-weight:400;color:#5A5A5A;white-space:nowrap;">18</div>
<div style="left:-140.20px;width:300px;text-align:center;top:332.00px;line-height:20px;font-size:9.6px;font-weight:400;color:#5A5A5A;white-space:nowrap;">19</div>
<div style="left:-140.20px;width:300px;text-align:center;top:350.00px;line-height:20px;font-size:9.6px;font-weight:400;color:#5A5A5A;white-space:nowrap;">20</div>
<div style="left:-140.20px;width:300px;text-align:center;top:368.00px;line-height:20px;font-size:9.6px;font-weight:400;color:#5A5A5A;white-space:nowrap;">21</div>
<div style="left:-140.20px;width:300px;text-align:center;top:385.00px;line-height:20px;font-size:9.6px;font-weight:400;color:#5A5A5A;white-space:nowrap;">22</div>
<div style="left:-140.20px;width:300px;text-align:center;top:403.00px;line-height:20px;font-size:9.6px;font-weight:400;color:#5A5A5A;white-space:nowrap;">23</div>
<div style="left:-140.20px;width:300px;text-align:center;top:420.00px;line-height:20px;font-size:9.6px;font-weight:400;color:#5A5A5A;white-space:nowrap;">24</div>
<div style="left:-140.20px;width:300px;text-align:center;top:438.00px;line-height:20px;font-size:9.6px;font-weight:400;color:#5A5A5A;white-space:nowrap;">25</div>
<div style="left:-140.20px;width:300px;text-align:center;top:456.00px;line-height:20px;font-size:9.6px;font-weight:400;color:#5A5A5A;white-space:nowrap;">26</div>
<div style="left:310.50px;width:300px;text-align:center;top:12.00px;line-height:20px;font-size:11.0px;font-weight:700;color:#FFFFFF;white-space:nowrap;">Eingaben</div>
<div style="left:21.00px;top:30.00px;line-height:20px;font-size:7.45px;font-weight:400;color:#5A5A5A;font-style:italic;white-space:nowrap;">Nur die hell markierten Felder sind Eingaben. Geplant = Budget, Ist = tatsächlicher Wert.</div>
<div style="left:30.95px;width:300px;text-align:center;top:64.00px;line-height:20px;font-size:9.6px;font-weight:700;color:#FFFFFF;white-space:nowrap;transform:scaleX(0.925);transform-origin:center center;text-shadow:0.3px 0 0 rgba(255,255,255,0.45);">Januar</div>
<div style="left:87.85px;width:300px;text-align:center;top:64.00px;line-height:20px;font-size:9.6px;font-weight:700;color:#FFFFFF;white-space:nowrap;transform:scaleX(0.925);transform-origin:center center;text-shadow:0.3px 0 0 rgba(255,255,255,0.45);">Februar</div>
<div style="left:144.75px;width:300px;text-align:center;top:64.00px;line-height:20px;font-size:9.6px;font-weight:700;color:#FFFFFF;white-space:nowrap;transform:scaleX(0.925);transform-origin:center center;text-shadow:0.3px 0 0 rgba(255,255,255,0.45);">März</div>
<div style="left:201.65px;width:300px;text-align:center;top:64.00px;line-height:20px;font-size:9.6px;font-weight:700;color:#FFFFFF;white-space:nowrap;transform:scaleX(0.925);transform-origin:center center;text-shadow:0.3px 0 0 rgba(255,255,255,0.45);">April</div>
<div style="left:258.55px;width:300px;text-align:center;top:64.00px;line-height:20px;font-size:9.6px;font-weight:700;color:#FFFFFF;white-space:nowrap;transform:scaleX(0.925);transform-origin:center center;text-shadow:0.3px 0 0 rgba(255,255,255,0.45);">Mai</div>
<div style="left:315.45px;width:300px;text-align:center;top:64.00px;line-height:20px;font-size:9.6px;font-weight:700;color:#FFFFFF;white-space:nowrap;transform:scaleX(0.925);transform-origin:center center;text-shadow:0.3px 0 0 rgba(255,255,255,0.45);">Juni</div>
<div style="left:372.35px;width:300px;text-align:center;top:64.00px;line-height:20px;font-size:9.6px;font-weight:700;color:#FFFFFF;white-space:nowrap;transform:scaleX(0.925);transform-origin:center center;text-shadow:0.3px 0 0 rgba(255,255,255,0.45);">Juli</div>
<div style="left:429.25px;width:300px;text-align:center;top:64.00px;line-height:20px;font-size:9.6px;font-weight:700;color:#FFFFFF;white-space:nowrap;transform:scaleX(0.925);transform-origin:center center;text-shadow:0.3px 0 0 rgba(255,255,255,0.45);">August</div>
<div style="left:486.15px;width:300px;text-align:center;top:64.00px;line-height:20px;font-size:9.6px;font-weight:700;color:#FFFFFF;white-space:nowrap;transform:scaleX(0.925);transform-origin:center center;text-shadow:0.3px 0 0 rgba(255,255,255,0.45);">September</div>
<div style="left:543.05px;width:300px;text-align:center;top:64.00px;line-height:20px;font-size:9.6px;font-weight:700;color:#FFFFFF;white-space:nowrap;transform:scaleX(0.925);transform-origin:center center;text-shadow:0.3px 0 0 rgba(255,255,255,0.45);">Oktober</div>
<div style="left:599.95px;width:300px;text-align:center;top:64.00px;line-height:20px;font-size:9.6px;font-weight:700;color:#FFFFFF;white-space:nowrap;transform:scaleX(0.925);transform-origin:center center;text-shadow:0.3px 0 0 rgba(255,255,255,0.45);">November</div>
<div style="left:21.80px;top:83.00px;line-height:20px;font-size:9.4px;font-weight:700;color:#FFFFFF;white-space:nowrap;transform:scaleX(0.820);transform-origin:left center;text-shadow:0.3px 0 0 rgba(255,255,255,0.5);">GEPLANT</div>
<div style="left:21.80px;top:100.00px;line-height:20px;font-size:9.4px;font-weight:700;color:#FFFFFF;white-space:nowrap;transform:scaleX(0.900);transform-origin:left center;text-shadow:0.3px 0 0 rgba(255,255,255,0.5);">Einnahmen</div>
<div style="left:21.80px;top:206.00px;line-height:20px;font-size:9.4px;font-weight:700;color:#FFFFFF;white-space:nowrap;transform:scaleX(0.900);transform-origin:left center;text-shadow:0.3px 0 0 rgba(255,255,255,0.5);">Fixkosten</div>
<div style="left:21.80px;top:364.00px;line-height:20px;font-size:9.4px;font-weight:700;color:#FFFFFF;white-space:nowrap;transform:scaleX(0.900);transform-origin:left center;text-shadow:0.3px 0 0 rgba(255,255,255,0.5);">Variable Kosten</div>
<div style="left:21.40px;top:118.00px;line-height:20px;font-size:9.9px;font-weight:400;color:#1E1E1E;white-space:nowrap;transform:scaleX(0.950);transform-origin:left center;text-shadow:0.35px 0 0 rgba(20,20,20,0.45);">Gehalt</div>
<div style="left:-93.10px;width:300px;text-align:right;top:118.00px;line-height:20px;font-size:10.0px;font-weight:400;color:#1E1E1E;white-space:nowrap;transform:scaleX(0.950);transform-origin:right center;text-shadow:0.35px 0 0 rgba(20,20,20,0.45);">€ 3.200</div>
<div style="left:-36.20px;width:300px;text-align:right;top:118.00px;line-height:20px;font-size:10.0px;font-weight:400;color:#1E1E1E;white-space:nowrap;transform:scaleX(0.950);transform-origin:right center;text-shadow:0.35px 0 0 rgba(20,20,20,0.45);">€ 3.200</div>
<div style="left:20.70px;width:300px;text-align:right;top:118.00px;line-height:20px;font-size:10.0px;font-weight:400;color:#1E1E1E;white-space:nowrap;transform:scaleX(0.950);transform-origin:right center;text-shadow:0.35px 0 0 rgba(20,20,20,0.45);">€ 3.200</div>
<div style="left:77.60px;width:300px;text-align:right;top:118.00px;line-height:20px;font-size:10.0px;font-weight:400;color:#1E1E1E;white-space:nowrap;transform:scaleX(0.950);transform-origin:right center;text-shadow:0.35px 0 0 rgba(20,20,20,0.45);">€ 3.200</div>
<div style="left:134.50px;width:300px;text-align:right;top:118.00px;line-height:20px;font-size:10.0px;font-weight:400;color:#1E1E1E;white-space:nowrap;transform:scaleX(0.950);transform-origin:right center;text-shadow:0.35px 0 0 rgba(20,20,20,0.45);">€ 3.200</div>
<div style="left:191.40px;width:300px;text-align:right;top:118.00px;line-height:20px;font-size:10.0px;font-weight:400;color:#1E1E1E;white-space:nowrap;transform:scaleX(0.950);transform-origin:right center;text-shadow:0.35px 0 0 rgba(20,20,20,0.45);">€ 3.200</div>
<div style="left:248.30px;width:300px;text-align:right;top:118.00px;line-height:20px;font-size:10.0px;font-weight:400;color:#1E1E1E;white-space:nowrap;transform:scaleX(0.950);transform-origin:right center;text-shadow:0.35px 0 0 rgba(20,20,20,0.45);">€ 3.200</div>
<div style="left:305.20px;width:300px;text-align:right;top:118.00px;line-height:20px;font-size:10.0px;font-weight:400;color:#1E1E1E;white-space:nowrap;transform:scaleX(0.950);transform-origin:right center;text-shadow:0.35px 0 0 rgba(20,20,20,0.45);">€ 3.200</div>
<div style="left:362.10px;width:300px;text-align:right;top:118.00px;line-height:20px;font-size:10.0px;font-weight:400;color:#1E1E1E;white-space:nowrap;transform:scaleX(0.950);transform-origin:right center;text-shadow:0.35px 0 0 rgba(20,20,20,0.45);">€ 3.200</div>
<div style="left:419.00px;width:300px;text-align:right;top:118.00px;line-height:20px;font-size:10.0px;font-weight:400;color:#1E1E1E;white-space:nowrap;transform:scaleX(0.950);transform-origin:right center;text-shadow:0.35px 0 0 rgba(20,20,20,0.45);">€ 3.200</div>
<div style="left:21.40px;top:135.00px;line-height:20px;font-size:9.9px;font-weight:400;color:#1E1E1E;white-space:nowrap;transform:scaleX(0.950);transform-origin:left center;text-shadow:0.35px 0 0 rgba(20,20,20,0.45);">Nebeneinkünfte</div>
<div style="left:-93.10px;width:300px;text-align:right;top:135.00px;line-height:20px;font-size:10.0px;font-weight:400;color:#1E1E1E;white-space:nowrap;transform:scaleX(0.950);transform-origin:right center;text-shadow:0.35px 0 0 rgba(20,20,20,0.45);">€ 250</div>
<div style="left:-36.20px;width:300px;text-align:right;top:135.00px;line-height:20px;font-size:10.0px;font-weight:400;color:#1E1E1E;white-space:nowrap;transform:scaleX(0.950);transform-origin:right center;text-shadow:0.35px 0 0 rgba(20,20,20,0.45);">€ 250</div>
<div style="left:20.70px;width:300px;text-align:right;top:135.00px;line-height:20px;font-size:10.0px;font-weight:400;color:#1E1E1E;white-space:nowrap;transform:scaleX(0.950);transform-origin:right center;text-shadow:0.35px 0 0 rgba(20,20,20,0.45);">€ 300</div>
<div style="left:77.60px;width:300px;text-align:right;top:135.00px;line-height:20px;font-size:10.0px;font-weight:400;color:#1E1E1E;white-space:nowrap;transform:scaleX(0.950);transform-origin:right center;text-shadow:0.35px 0 0 rgba(20,20,20,0.45);">€ 300</div>
<div style="left:134.50px;width:300px;text-align:right;top:135.00px;line-height:20px;font-size:10.0px;font-weight:400;color:#1E1E1E;white-space:nowrap;transform:scaleX(0.950);transform-origin:right center;text-shadow:0.35px 0 0 rgba(20,20,20,0.45);">€ 300</div>
<div style="left:191.40px;width:300px;text-align:right;top:135.00px;line-height:20px;font-size:10.0px;font-weight:400;color:#1E1E1E;white-space:nowrap;transform:scaleX(0.950);transform-origin:right center;text-shadow:0.35px 0 0 rgba(20,20,20,0.45);">€ 350</div>
<div style="left:248.30px;width:300px;text-align:right;top:135.00px;line-height:20px;font-size:10.0px;font-weight:400;color:#1E1E1E;white-space:nowrap;transform:scaleX(0.950);transform-origin:right center;text-shadow:0.35px 0 0 rgba(20,20,20,0.45);">€ 350</div>
<div style="left:305.20px;width:300px;text-align:right;top:135.00px;line-height:20px;font-size:10.0px;font-weight:400;color:#1E1E1E;white-space:nowrap;transform:scaleX(0.950);transform-origin:right center;text-shadow:0.35px 0 0 rgba(20,20,20,0.45);">€ 350</div>
<div style="left:362.10px;width:300px;text-align:right;top:135.00px;line-height:20px;font-size:10.0px;font-weight:400;color:#1E1E1E;white-space:nowrap;transform:scaleX(0.950);transform-origin:right center;text-shadow:0.35px 0 0 rgba(20,20,20,0.45);">€ 300</div>
<div style="left:419.00px;width:300px;text-align:right;top:135.00px;line-height:20px;font-size:10.0px;font-weight:400;color:#1E1E1E;white-space:nowrap;transform:scaleX(0.950);transform-origin:right center;text-shadow:0.35px 0 0 rgba(20,20,20,0.45);">€ 300</div>
<div style="left:21.40px;top:153.00px;line-height:20px;font-size:9.9px;font-weight:400;color:#1E1E1E;white-space:nowrap;transform:scaleX(0.950);transform-origin:left center;text-shadow:0.35px 0 0 rgba(20,20,20,0.45);">Sonstige Einnahmen</div>
<div style="left:-93.10px;width:300px;text-align:right;top:153.00px;line-height:20px;font-size:10.0px;font-weight:400;color:#1E1E1E;white-space:nowrap;transform:scaleX(0.950);transform-origin:right center;text-shadow:0.35px 0 0 rgba(20,20,20,0.45);">€ 0</div>
<div style="left:-36.20px;width:300px;text-align:right;top:153.00px;line-height:20px;font-size:10.0px;font-weight:400;color:#1E1E1E;white-space:nowrap;transform:scaleX(0.950);transform-origin:right center;text-shadow:0.35px 0 0 rgba(20,20,20,0.45);">€ 0</div>
<div style="left:20.70px;width:300px;text-align:right;top:153.00px;line-height:20px;font-size:10.0px;font-weight:400;color:#1E1E1E;white-space:nowrap;transform:scaleX(0.950);transform-origin:right center;text-shadow:0.35px 0 0 rgba(20,20,20,0.45);">€ 250</div>
<div style="left:77.60px;width:300px;text-align:right;top:153.00px;line-height:20px;font-size:10.0px;font-weight:400;color:#1E1E1E;white-space:nowrap;transform:scaleX(0.950);transform-origin:right center;text-shadow:0.35px 0 0 rgba(20,20,20,0.45);">€ 0</div>
<div style="left:134.50px;width:300px;text-align:right;top:153.00px;line-height:20px;font-size:10.0px;font-weight:400;color:#1E1E1E;white-space:nowrap;transform:scaleX(0.950);transform-origin:right center;text-shadow:0.35px 0 0 rgba(20,20,20,0.45);">€ 0</div>
<div style="left:191.40px;width:300px;text-align:right;top:153.00px;line-height:20px;font-size:10.0px;font-weight:400;color:#1E1E1E;white-space:nowrap;transform:scaleX(0.950);transform-origin:right center;text-shadow:0.35px 0 0 rgba(20,20,20,0.45);">€ 0</div>
<div style="left:248.30px;width:300px;text-align:right;top:153.00px;line-height:20px;font-size:10.0px;font-weight:400;color:#1E1E1E;white-space:nowrap;transform:scaleX(0.950);transform-origin:right center;text-shadow:0.35px 0 0 rgba(20,20,20,0.45);">€ 150</div>
<div style="left:305.20px;width:300px;text-align:right;top:153.00px;line-height:20px;font-size:10.0px;font-weight:400;color:#1E1E1E;white-space:nowrap;transform:scaleX(0.950);transform-origin:right center;text-shadow:0.35px 0 0 rgba(20,20,20,0.45);">€ 0</div>
<div style="left:362.10px;width:300px;text-align:right;top:153.00px;line-height:20px;font-size:10.0px;font-weight:400;color:#1E1E1E;white-space:nowrap;transform:scaleX(0.950);transform-origin:right center;text-shadow:0.35px 0 0 rgba(20,20,20,0.45);">€ 0</div>
<div style="left:419.00px;width:300px;text-align:right;top:153.00px;line-height:20px;font-size:10.0px;font-weight:400;color:#1E1E1E;white-space:nowrap;transform:scaleX(0.950);transform-origin:right center;text-shadow:0.35px 0 0 rgba(20,20,20,0.45);">€ 0</div>
<div style="left:21.50px;top:174.00px;line-height:20px;font-size:9.8px;font-weight:700;color:#1E1E1E;white-space:nowrap;transform:scaleX(0.884);transform-origin:left center;text-shadow:0.3px 0 0 rgba(0,0,0,0.5);">Summe Einnahmen</div>
<div style="left:-93.00px;width:300px;text-align:right;top:170.00px;line-height:20px;font-size:10.3px;font-weight:700;color:#111111;white-space:nowrap;transform:scaleX(0.920);transform-origin:right center;">€ 3.450</div>
<div style="left:-36.10px;width:300px;text-align:right;top:170.00px;line-height:20px;font-size:10.3px;font-weight:700;color:#111111;white-space:nowrap;transform:scaleX(0.920);transform-origin:right center;">€ 3.450</div>
<div style="left:20.80px;width:300px;text-align:right;top:170.00px;line-height:20px;font-size:10.3px;font-weight:700;color:#111111;white-space:nowrap;transform:scaleX(0.920);transform-origin:right center;">€ 3.750</div>
<div style="left:77.70px;width:300px;text-align:right;top:170.00px;line-height:20px;font-size:10.3px;font-weight:700;color:#111111;white-space:nowrap;transform:scaleX(0.920);transform-origin:right center;">€ 3.500</div>
<div style="left:134.60px;width:300px;text-align:right;top:170.00px;line-height:20px;font-size:10.3px;font-weight:700;color:#111111;white-space:nowrap;transform:scaleX(0.920);transform-origin:right center;">€ 3.500</div>
<div style="left:191.50px;width:300px;text-align:right;top:170.00px;line-height:20px;font-size:10.3px;font-weight:700;color:#111111;white-space:nowrap;transform:scaleX(0.920);transform-origin:right center;">€ 3.550</div>
<div style="left:248.40px;width:300px;text-align:right;top:170.00px;line-height:20px;font-size:10.3px;font-weight:700;color:#111111;white-space:nowrap;transform:scaleX(0.920);transform-origin:right center;">€ 3.700</div>
<div style="left:305.30px;width:300px;text-align:right;top:170.00px;line-height:20px;font-size:10.3px;font-weight:700;color:#111111;white-space:nowrap;transform:scaleX(0.920);transform-origin:right center;">€ 3.550</div>
<div style="left:362.20px;width:300px;text-align:right;top:170.00px;line-height:20px;font-size:10.3px;font-weight:700;color:#111111;white-space:nowrap;transform:scaleX(0.920);transform-origin:right center;">€ 3.500</div>
<div style="left:419.10px;width:300px;text-align:right;top:170.00px;line-height:20px;font-size:10.3px;font-weight:700;color:#111111;white-space:nowrap;transform:scaleX(0.920);transform-origin:right center;">€ 3.500</div>
<div style="left:21.40px;top:224.00px;line-height:20px;font-size:9.9px;font-weight:400;color:#1E1E1E;white-space:nowrap;transform:scaleX(0.950);transform-origin:left center;text-shadow:0.35px 0 0 rgba(20,20,20,0.45);">Miete/Hypothek</div>
<div style="left:-93.10px;width:300px;text-align:right;top:223.00px;line-height:20px;font-size:10.0px;font-weight:400;color:#1E1E1E;white-space:nowrap;transform:scaleX(0.950);transform-origin:right center;text-shadow:0.35px 0 0 rgba(20,20,20,0.45);">€ 950</div>
<div style="left:-36.20px;width:300px;text-align:right;top:223.00px;line-height:20px;font-size:10.0px;font-weight:400;color:#1E1E1E;white-space:nowrap;transform:scaleX(0.950);transform-origin:right center;text-shadow:0.35px 0 0 rgba(20,20,20,0.45);">€ 950</div>
<div style="left:20.70px;width:300px;text-align:right;top:223.00px;line-height:20px;font-size:10.0px;font-weight:400;color:#1E1E1E;white-space:nowrap;transform:scaleX(0.950);transform-origin:right center;text-shadow:0.35px 0 0 rgba(20,20,20,0.45);">€ 950</div>
<div style="left:77.60px;width:300px;text-align:right;top:223.00px;line-height:20px;font-size:10.0px;font-weight:400;color:#1E1E1E;white-space:nowrap;transform:scaleX(0.950);transform-origin:right center;text-shadow:0.35px 0 0 rgba(20,20,20,0.45);">€ 950</div>
<div style="left:134.50px;width:300px;text-align:right;top:223.00px;line-height:20px;font-size:10.0px;font-weight:400;color:#1E1E1E;white-space:nowrap;transform:scaleX(0.950);transform-origin:right center;text-shadow:0.35px 0 0 rgba(20,20,20,0.45);">€ 950</div>
<div style="left:191.40px;width:300px;text-align:right;top:223.00px;line-height:20px;font-size:10.0px;font-weight:400;color:#1E1E1E;white-space:nowrap;transform:scaleX(0.950);transform-origin:right center;text-shadow:0.35px 0 0 rgba(20,20,20,0.45);">€ 950</div>
<div style="left:248.30px;width:300px;text-align:right;top:223.00px;line-height:20px;font-size:10.0px;font-weight:400;color:#1E1E1E;white-space:nowrap;transform:scaleX(0.950);transform-origin:right center;text-shadow:0.35px 0 0 rgba(20,20,20,0.45);">€ 950</div>
<div style="left:305.20px;width:300px;text-align:right;top:223.00px;line-height:20px;font-size:10.0px;font-weight:400;color:#1E1E1E;white-space:nowrap;transform:scaleX(0.950);transform-origin:right center;text-shadow:0.35px 0 0 rgba(20,20,20,0.45);">€ 950</div>
<div style="left:362.10px;width:300px;text-align:right;top:223.00px;line-height:20px;font-size:10.0px;font-weight:400;color:#1E1E1E;white-space:nowrap;transform:scaleX(0.950);transform-origin:right center;text-shadow:0.35px 0 0 rgba(20,20,20,0.45);">€ 950</div>
<div style="left:419.00px;width:300px;text-align:right;top:223.00px;line-height:20px;font-size:10.0px;font-weight:400;color:#1E1E1E;white-space:nowrap;transform:scaleX(0.950);transform-origin:right center;text-shadow:0.35px 0 0 rgba(20,20,20,0.45);">€ 950</div>
<div style="left:21.40px;top:241.00px;line-height:20px;font-size:9.9px;font-weight:400;color:#1E1E1E;white-space:nowrap;transform:scaleX(0.950);transform-origin:left center;text-shadow:0.35px 0 0 rgba(20,20,20,0.45);">Strom/Wasser/Heizung</div>
<div style="left:-93.10px;width:300px;text-align:right;top:241.00px;line-height:20px;font-size:10.0px;font-weight:400;color:#1E1E1E;white-space:nowrap;transform:scaleX(0.950);transform-origin:right center;text-shadow:0.35px 0 0 rgba(20,20,20,0.45);">€ 170</div>
<div style="left:-36.20px;width:300px;text-align:right;top:241.00px;line-height:20px;font-size:10.0px;font-weight:400;color:#1E1E1E;white-space:nowrap;transform:scaleX(0.950);transform-origin:right center;text-shadow:0.35px 0 0 rgba(20,20,20,0.45);">€ 170</div>
<div style="left:20.70px;width:300px;text-align:right;top:241.00px;line-height:20px;font-size:10.0px;font-weight:400;color:#1E1E1E;white-space:nowrap;transform:scaleX(0.950);transform-origin:right center;text-shadow:0.35px 0 0 rgba(20,20,20,0.45);">€ 160</div>
<div style="left:77.60px;width:300px;text-align:right;top:241.00px;line-height:20px;font-size:10.0px;font-weight:400;color:#1E1E1E;white-space:nowrap;transform:scaleX(0.950);transform-origin:right center;text-shadow:0.35px 0 0 rgba(20,20,20,0.45);">€ 150</div>
<div style="left:134.50px;width:300px;text-align:right;top:241.00px;line-height:20px;font-size:10.0px;font-weight:400;color:#1E1E1E;white-space:nowrap;transform:scaleX(0.950);transform-origin:right center;text-shadow:0.35px 0 0 rgba(20,20,20,0.45);">€ 145</div>
<div style="left:191.40px;width:300px;text-align:right;top:241.00px;line-height:20px;font-size:10.0px;font-weight:400;color:#1E1E1E;white-space:nowrap;transform:scaleX(0.950);transform-origin:right center;text-shadow:0.35px 0 0 rgba(20,20,20,0.45);">€ 140</div>
<div style="left:248.30px;width:300px;text-align:right;top:241.00px;line-height:20px;font-size:10.0px;font-weight:400;color:#1E1E1E;white-space:nowrap;transform:scaleX(0.950);transform-origin:right center;text-shadow:0.35px 0 0 rgba(20,20,20,0.45);">€ 140</div>
<div style="left:305.20px;width:300px;text-align:right;top:241.00px;line-height:20px;font-size:10.0px;font-weight:400;color:#1E1E1E;white-space:nowrap;transform:scaleX(0.950);transform-origin:right center;text-shadow:0.35px 0 0 rgba(20,20,20,0.45);">€ 145</div>
<div style="left:362.10px;width:300px;text-align:right;top:241.00px;line-height:20px;font-size:10.0px;font-weight:400;color:#1E1E1E;white-space:nowrap;transform:scaleX(0.950);transform-origin:right center;text-shadow:0.35px 0 0 rgba(20,20,20,0.45);">€ 150</div>
<div style="left:419.00px;width:300px;text-align:right;top:241.00px;line-height:20px;font-size:10.0px;font-weight:400;color:#1E1E1E;white-space:nowrap;transform:scaleX(0.950);transform-origin:right center;text-shadow:0.35px 0 0 rgba(20,20,20,0.45);">€ 160</div>
<div style="left:21.40px;top:259.00px;line-height:20px;font-size:9.9px;font-weight:400;color:#1E1E1E;white-space:nowrap;transform:scaleX(0.950);transform-origin:left center;text-shadow:0.35px 0 0 rgba(20,20,20,0.45);">Internet/Telefon</div>
<div style="left:-93.10px;width:300px;text-align:right;top:259.00px;line-height:20px;font-size:10.0px;font-weight:400;color:#1E1E1E;white-space:nowrap;transform:scaleX(0.950);transform-origin:right center;text-shadow:0.35px 0 0 rgba(20,20,20,0.45);">€ 45</div>
<div style="left:-36.20px;width:300px;text-align:right;top:259.00px;line-height:20px;font-size:10.0px;font-weight:400;color:#1E1E1E;white-space:nowrap;transform:scaleX(0.950);transform-origin:right center;text-shadow:0.35px 0 0 rgba(20,20,20,0.45);">€ 45</div>
<div style="left:20.70px;width:300px;text-align:right;top:259.00px;line-height:20px;font-size:10.0px;font-weight:400;color:#1E1E1E;white-space:nowrap;transform:scaleX(0.950);transform-origin:right center;text-shadow:0.35px 0 0 rgba(20,20,20,0.45);">€ 45</div>
<div style="left:77.60px;width:300px;text-align:right;top:259.00px;line-height:20px;font-size:10.0px;font-weight:400;color:#1E1E1E;white-space:nowrap;transform:scaleX(0.950);transform-origin:right center;text-shadow:0.35px 0 0 rgba(20,20,20,0.45);">€ 45</div>
<div style="left:134.50px;width:300px;text-align:right;top:259.00px;line-height:20px;font-size:10.0px;font-weight:400;color:#1E1E1E;white-space:nowrap;transform:scaleX(0.950);transform-origin:right center;text-shadow:0.35px 0 0 rgba(20,20,20,0.45);">€ 45</div>
<div style="left:191.40px;width:300px;text-align:right;top:259.00px;line-height:20px;font-size:10.0px;font-weight:400;color:#1E1E1E;white-space:nowrap;transform:scaleX(0.950);transform-origin:right center;text-shadow:0.35px 0 0 rgba(20,20,20,0.45);">€ 45</div>
<div style="left:248.30px;width:300px;text-align:right;top:259.00px;line-height:20px;font-size:10.0px;font-weight:400;color:#1E1E1E;white-space:nowrap;transform:scaleX(0.950);transform-origin:right center;text-shadow:0.35px 0 0 rgba(20,20,20,0.45);">€ 45</div>
<div style="left:305.20px;width:300px;text-align:right;top:259.00px;line-height:20px;font-size:10.0px;font-weight:400;color:#1E1E1E;white-space:nowrap;transform:scaleX(0.950);transform-origin:right center;text-shadow:0.35px 0 0 rgba(20,20,20,0.45);">€ 45</div>
<div style="left:362.10px;width:300px;text-align:right;top:259.00px;line-height:20px;font-size:10.0px;font-weight:400;color:#1E1E1E;white-space:nowrap;transform:scaleX(0.950);transform-origin:right center;text-shadow:0.35px 0 0 rgba(20,20,20,0.45);">€ 45</div>
<div style="left:419.00px;width:300px;text-align:right;top:259.00px;line-height:20px;font-size:10.0px;font-weight:400;color:#1E1E1E;white-space:nowrap;transform:scaleX(0.950);transform-origin:right center;text-shadow:0.35px 0 0 rgba(20,20,20,0.45);">€ 45</div>
<div style="left:21.40px;top:276.00px;line-height:20px;font-size:9.9px;font-weight:400;color:#1E1E1E;white-space:nowrap;transform:scaleX(0.950);transform-origin:left center;text-shadow:0.35px 0 0 rgba(20,20,20,0.45);">Versicherungen</div>
<div style="left:-93.10px;width:300px;text-align:right;top:276.00px;line-height:20px;font-size:10.0px;font-weight:400;color:#1E1E1E;white-space:nowrap;transform:scaleX(0.950);transform-origin:right center;text-shadow:0.35px 0 0 rgba(20,20,20,0.45);">€ 120</div>
<div style="left:-36.20px;width:300px;text-align:right;top:276.00px;line-height:20px;font-size:10.0px;font-weight:400;color:#1E1E1E;white-space:nowrap;transform:scaleX(0.950);transform-origin:right center;text-shadow:0.35px 0 0 rgba(20,20,20,0.45);">€ 120</div>
<div style="left:20.70px;width:300px;text-align:right;top:276.00px;line-height:20px;font-size:10.0px;font-weight:400;color:#1E1E1E;white-space:nowrap;transform:scaleX(0.950);transform-origin:right center;text-shadow:0.35px 0 0 rgba(20,20,20,0.45);">€ 120</div>
<div style="left:77.60px;width:300px;text-align:right;top:276.00px;line-height:20px;font-size:10.0px;font-weight:400;color:#1E1E1E;white-space:nowrap;transform:scaleX(0.950);transform-origin:right center;text-shadow:0.35px 0 0 rgba(20,20,20,0.45);">€ 120</div>
<div style="left:134.50px;width:300px;text-align:right;top:276.00px;line-height:20px;font-size:10.0px;font-weight:400;color:#1E1E1E;white-space:nowrap;transform:scaleX(0.950);transform-origin:right center;text-shadow:0.35px 0 0 rgba(20,20,20,0.45);">€ 120</div>
<div style="left:191.40px;width:300px;text-align:right;top:276.00px;line-height:20px;font-size:10.0px;font-weight:400;color:#1E1E1E;white-space:nowrap;transform:scaleX(0.950);transform-origin:right center;text-shadow:0.35px 0 0 rgba(20,20,20,0.45);">€ 120</div>
<div style="left:248.30px;width:300px;text-align:right;top:276.00px;line-height:20px;font-size:10.0px;font-weight:400;color:#1E1E1E;white-space:nowrap;transform:scaleX(0.950);transform-origin:right center;text-shadow:0.35px 0 0 rgba(20,20,20,0.45);">€ 120</div>
<div style="left:305.20px;width:300px;text-align:right;top:276.00px;line-height:20px;font-size:10.0px;font-weight:400;color:#1E1E1E;white-space:nowrap;transform:scaleX(0.950);transform-origin:right center;text-shadow:0.35px 0 0 rgba(20,20,20,0.45);">€ 120</div>
<div style="left:362.10px;width:300px;text-align:right;top:276.00px;line-height:20px;font-size:10.0px;font-weight:400;color:#1E1E1E;white-space:nowrap;transform:scaleX(0.950);transform-origin:right center;text-shadow:0.35px 0 0 rgba(20,20,20,0.45);">€ 120</div>
<div style="left:419.00px;width:300px;text-align:right;top:276.00px;line-height:20px;font-size:10.0px;font-weight:400;color:#1E1E1E;white-space:nowrap;transform:scaleX(0.950);transform-origin:right center;text-shadow:0.35px 0 0 rgba(20,20,20,0.45);">€ 120</div>
<div style="left:21.40px;top:294.00px;line-height:20px;font-size:9.9px;font-weight:400;color:#1E1E1E;white-space:nowrap;transform:scaleX(0.950);transform-origin:left center;text-shadow:0.35px 0 0 rgba(20,20,20,0.45);">Kredit/Raten</div>
<div style="left:-93.10px;width:300px;text-align:right;top:294.00px;line-height:20px;font-size:10.0px;font-weight:400;color:#1E1E1E;white-space:nowrap;transform:scaleX(0.950);transform-origin:right center;text-shadow:0.35px 0 0 rgba(20,20,20,0.45);">€ 180</div>
<div style="left:-36.20px;width:300px;text-align:right;top:294.00px;line-height:20px;font-size:10.0px;font-weight:400;color:#1E1E1E;white-space:nowrap;transform:scaleX(0.950);transform-origin:right center;text-shadow:0.35px 0 0 rgba(20,20,20,0.45);">€ 180</div>
<div style="left:20.70px;width:300px;text-align:right;top:294.00px;line-height:20px;font-size:10.0px;font-weight:400;color:#1E1E1E;white-space:nowrap;transform:scaleX(0.950);transform-origin:right center;text-shadow:0.35px 0 0 rgba(20,20,20,0.45);">€ 180</div>
<div style="left:77.60px;width:300px;text-align:right;top:294.00px;line-height:20px;font-size:10.0px;font-weight:400;color:#1E1E1E;white-space:nowrap;transform:scaleX(0.950);transform-origin:right center;text-shadow:0.35px 0 0 rgba(20,20,20,0.45);">€ 180</div>
<div style="left:134.50px;width:300px;text-align:right;top:294.00px;line-height:20px;font-size:10.0px;font-weight:400;color:#1E1E1E;white-space:nowrap;transform:scaleX(0.950);transform-origin:right center;text-shadow:0.35px 0 0 rgba(20,20,20,0.45);">€ 180</div>
<div style="left:191.40px;width:300px;text-align:right;top:294.00px;line-height:20px;font-size:10.0px;font-weight:400;color:#1E1E1E;white-space:nowrap;transform:scaleX(0.950);transform-origin:right center;text-shadow:0.35px 0 0 rgba(20,20,20,0.45);">€ 180</div>
<div style="left:248.30px;width:300px;text-align:right;top:294.00px;line-height:20px;font-size:10.0px;font-weight:400;color:#1E1E1E;white-space:nowrap;transform:scaleX(0.950);transform-origin:right center;text-shadow:0.35px 0 0 rgba(20,20,20,0.45);">€ 180</div>
<div style="left:305.20px;width:300px;text-align:right;top:294.00px;line-height:20px;font-size:10.0px;font-weight:400;color:#1E1E1E;white-space:nowrap;transform:scaleX(0.950);transform-origin:right center;text-shadow:0.35px 0 0 rgba(20,20,20,0.45);">€ 180</div>
<div style="left:362.10px;width:300px;text-align:right;top:294.00px;line-height:20px;font-size:10.0px;font-weight:400;color:#1E1E1E;white-space:nowrap;transform:scaleX(0.950);transform-origin:right center;text-shadow:0.35px 0 0 rgba(20,20,20,0.45);">€ 180</div>
<div style="left:419.00px;width:300px;text-align:right;top:294.00px;line-height:20px;font-size:10.0px;font-weight:400;color:#1E1E1E;white-space:nowrap;transform:scaleX(0.950);transform-origin:right center;text-shadow:0.35px 0 0 rgba(20,20,20,0.45);">€ 180</div>
<div style="left:21.40px;top:311.00px;line-height:20px;font-size:9.9px;font-weight:400;color:#1E1E1E;white-space:nowrap;transform:scaleX(0.950);transform-origin:left center;text-shadow:0.35px 0 0 rgba(20,20,20,0.45);">Abos</div>
<div style="left:-93.10px;width:300px;text-align:right;top:311.00px;line-height:20px;font-size:10.0px;font-weight:400;color:#1E1E1E;white-space:nowrap;transform:scaleX(0.950);transform-origin:right center;text-shadow:0.35px 0 0 rgba(20,20,20,0.45);">€ 35</div>
<div style="left:-36.20px;width:300px;text-align:right;top:311.00px;line-height:20px;font-size:10.0px;font-weight:400;color:#1E1E1E;white-space:nowrap;transform:scaleX(0.950);transform-origin:right center;text-shadow:0.35px 0 0 rgba(20,20,20,0.45);">€ 35</div>
<div style="left:20.70px;width:300px;text-align:right;top:311.00px;line-height:20px;font-size:10.0px;font-weight:400;color:#1E1E1E;white-space:nowrap;transform:scaleX(0.950);transform-origin:right center;text-shadow:0.35px 0 0 rgba(20,20,20,0.45);">€ 35</div>
<div style="left:77.60px;width:300px;text-align:right;top:311.00px;line-height:20px;font-size:10.0px;font-weight:400;color:#1E1E1E;white-space:nowrap;transform:scaleX(0.950);transform-origin:right center;text-shadow:0.35px 0 0 rgba(20,20,20,0.45);">€ 35</div>
<div style="left:134.50px;width:300px;text-align:right;top:311.00px;line-height:20px;font-size:10.0px;font-weight:400;color:#1E1E1E;white-space:nowrap;transform:scaleX(0.950);transform-origin:right center;text-shadow:0.35px 0 0 rgba(20,20,20,0.45);">€ 35</div>
<div style="left:191.40px;width:300px;text-align:right;top:311.00px;line-height:20px;font-size:10.0px;font-weight:400;color:#1E1E1E;white-space:nowrap;transform:scaleX(0.950);transform-origin:right center;text-shadow:0.35px 0 0 rgba(20,20,20,0.45);">€ 35</div>
<div style="left:248.30px;width:300px;text-align:right;top:311.00px;line-height:20px;font-size:10.0px;font-weight:400;color:#1E1E1E;white-space:nowrap;transform:scaleX(0.950);transform-origin:right center;text-shadow:0.35px 0 0 rgba(20,20,20,0.45);">€ 35</div>
<div style="left:305.20px;width:300px;text-align:right;top:311.00px;line-height:20px;font-size:10.0px;font-weight:400;color:#1E1E1E;white-space:nowrap;transform:scaleX(0.950);transform-origin:right center;text-shadow:0.35px 0 0 rgba(20,20,20,0.45);">€ 35</div>
<div style="left:362.10px;width:300px;text-align:right;top:311.00px;line-height:20px;font-size:10.0px;font-weight:400;color:#1E1E1E;white-space:nowrap;transform:scaleX(0.950);transform-origin:right center;text-shadow:0.35px 0 0 rgba(20,20,20,0.45);">€ 35</div>
<div style="left:419.00px;width:300px;text-align:right;top:311.00px;line-height:20px;font-size:10.0px;font-weight:400;color:#1E1E1E;white-space:nowrap;transform:scaleX(0.950);transform-origin:right center;text-shadow:0.35px 0 0 rgba(20,20,20,0.45);">€ 35</div>
<div style="left:21.50px;top:332.00px;line-height:20px;font-size:9.8px;font-weight:700;color:#1E1E1E;white-space:nowrap;transform:scaleX(0.884);transform-origin:left center;text-shadow:0.3px 0 0 rgba(0,0,0,0.5);">Summe Fixkosten</div>
<div style="left:-93.00px;width:300px;text-align:right;top:328.00px;line-height:20px;font-size:10.3px;font-weight:700;color:#111111;white-space:nowrap;transform:scaleX(0.920);transform-origin:right center;">€ 1.500</div>
<div style="left:-36.10px;width:300px;text-align:right;top:328.00px;line-height:20px;font-size:10.3px;font-weight:700;color:#111111;white-space:nowrap;transform:scaleX(0.920);transform-origin:right center;">€ 1.500</div>
<div style="left:20.80px;width:300px;text-align:right;top:328.00px;line-height:20px;font-size:10.3px;font-weight:700;color:#111111;white-space:nowrap;transform:scaleX(0.920);transform-origin:right center;">€ 1.490</div>
<div style="left:77.70px;width:300px;text-align:right;top:328.00px;line-height:20px;font-size:10.3px;font-weight:700;color:#111111;white-space:nowrap;transform:scaleX(0.920);transform-origin:right center;">€ 1.480</div>
<div style="left:134.60px;width:300px;text-align:right;top:328.00px;line-height:20px;font-size:10.3px;font-weight:700;color:#111111;white-space:nowrap;transform:scaleX(0.920);transform-origin:right center;">€ 1.475</div>
<div style="left:191.50px;width:300px;text-align:right;top:328.00px;line-height:20px;font-size:10.3px;font-weight:700;color:#111111;white-space:nowrap;transform:scaleX(0.920);transform-origin:right center;">€ 1.470</div>
<div style="left:248.40px;width:300px;text-align:right;top:328.00px;line-height:20px;font-size:10.3px;font-weight:700;color:#111111;white-space:nowrap;transform:scaleX(0.920);transform-origin:right center;">€ 1.470</div>
<div style="left:305.30px;width:300px;text-align:right;top:328.00px;line-height:20px;font-size:10.3px;font-weight:700;color:#111111;white-space:nowrap;transform:scaleX(0.920);transform-origin:right center;">€ 1.475</div>
<div style="left:362.20px;width:300px;text-align:right;top:328.00px;line-height:20px;font-size:10.3px;font-weight:700;color:#111111;white-space:nowrap;transform:scaleX(0.920);transform-origin:right center;">€ 1.480</div>
<div style="left:419.10px;width:300px;text-align:right;top:328.00px;line-height:20px;font-size:10.3px;font-weight:700;color:#111111;white-space:nowrap;transform:scaleX(0.920);transform-origin:right center;">€ 1.480</div>
<div style="left:21.40px;top:382.00px;line-height:20px;font-size:9.9px;font-weight:400;color:#1E1E1E;white-space:nowrap;transform:scaleX(0.950);transform-origin:left center;text-shadow:0.35px 0 0 rgba(20,20,20,0.45);">Lebensmittel</div>
<div style="left:-93.10px;width:300px;text-align:right;top:382.00px;line-height:20px;font-size:10.0px;font-weight:400;color:#1E1E1E;white-space:nowrap;transform:scaleX(0.950);transform-origin:right center;text-shadow:0.35px 0 0 rgba(20,20,20,0.45);">€ 360</div>
<div style="left:-36.20px;width:300px;text-align:right;top:382.00px;line-height:20px;font-size:10.0px;font-weight:400;color:#1E1E1E;white-space:nowrap;transform:scaleX(0.950);transform-origin:right center;text-shadow:0.35px 0 0 rgba(20,20,20,0.45);">€ 350</div>
<div style="left:20.70px;width:300px;text-align:right;top:382.00px;line-height:20px;font-size:10.0px;font-weight:400;color:#1E1E1E;white-space:nowrap;transform:scaleX(0.950);transform-origin:right center;text-shadow:0.35px 0 0 rgba(20,20,20,0.45);">€ 360</div>
<div style="left:77.60px;width:300px;text-align:right;top:382.00px;line-height:20px;font-size:10.0px;font-weight:400;color:#1E1E1E;white-space:nowrap;transform:scaleX(0.950);transform-origin:right center;text-shadow:0.35px 0 0 rgba(20,20,20,0.45);">€ 370</div>
<div style="left:134.50px;width:300px;text-align:right;top:382.00px;line-height:20px;font-size:10.0px;font-weight:400;color:#1E1E1E;white-space:nowrap;transform:scaleX(0.950);transform-origin:right center;text-shadow:0.35px 0 0 rgba(20,20,20,0.45);">€ 365</div>
<div style="left:191.40px;width:300px;text-align:right;top:382.00px;line-height:20px;font-size:10.0px;font-weight:400;color:#1E1E1E;white-space:nowrap;transform:scaleX(0.950);transform-origin:right center;text-shadow:0.35px 0 0 rgba(20,20,20,0.45);">€ 380</div>
<div style="left:248.30px;width:300px;text-align:right;top:382.00px;line-height:20px;font-size:10.0px;font-weight:400;color:#1E1E1E;white-space:nowrap;transform:scaleX(0.950);transform-origin:right center;text-shadow:0.35px 0 0 rgba(20,20,20,0.45);">€ 390</div>
<div style="left:305.20px;width:300px;text-align:right;top:382.00px;line-height:20px;font-size:10.0px;font-weight:400;color:#1E1E1E;white-space:nowrap;transform:scaleX(0.950);transform-origin:right center;text-shadow:0.35px 0 0 rgba(20,20,20,0.45);">€ 380</div>
<div style="left:362.10px;width:300px;text-align:right;top:382.00px;line-height:20px;font-size:10.0px;font-weight:400;color:#1E1E1E;white-space:nowrap;transform:scaleX(0.950);transform-origin:right center;text-shadow:0.35px 0 0 rgba(20,20,20,0.45);">€ 370</div>
<div style="left:419.00px;width:300px;text-align:right;top:382.00px;line-height:20px;font-size:10.0px;font-weight:400;color:#1E1E1E;white-space:nowrap;transform:scaleX(0.950);transform-origin:right center;text-shadow:0.35px 0 0 rgba(20,20,20,0.45);">€ 360</div>
<div style="left:21.40px;top:399.00px;line-height:20px;font-size:9.9px;font-weight:400;color:#1E1E1E;white-space:nowrap;transform:scaleX(0.950);transform-origin:left center;text-shadow:0.35px 0 0 rgba(20,20,20,0.45);">Transport</div>
<div style="left:-93.10px;width:300px;text-align:right;top:399.00px;line-height:20px;font-size:10.0px;font-weight:400;color:#1E1E1E;white-space:nowrap;transform:scaleX(0.950);transform-origin:right center;text-shadow:0.35px 0 0 rgba(20,20,20,0.45);">€ 130</div>
<div style="left:-36.20px;width:300px;text-align:right;top:399.00px;line-height:20px;font-size:10.0px;font-weight:400;color:#1E1E1E;white-space:nowrap;transform:scaleX(0.950);transform-origin:right center;text-shadow:0.35px 0 0 rgba(20,20,20,0.45);">€ 125</div>
<div style="left:20.70px;width:300px;text-align:right;top:399.00px;line-height:20px;font-size:10.0px;font-weight:400;color:#1E1E1E;white-space:nowrap;transform:scaleX(0.950);transform-origin:right center;text-shadow:0.35px 0 0 rgba(20,20,20,0.45);">€ 130</div>
<div style="left:77.60px;width:300px;text-align:right;top:399.00px;line-height:20px;font-size:10.0px;font-weight:400;color:#1E1E1E;white-space:nowrap;transform:scaleX(0.950);transform-origin:right center;text-shadow:0.35px 0 0 rgba(20,20,20,0.45);">€ 140</div>
<div style="left:134.50px;width:300px;text-align:right;top:399.00px;line-height:20px;font-size:10.0px;font-weight:400;color:#1E1E1E;white-space:nowrap;transform:scaleX(0.950);transform-origin:right center;text-shadow:0.35px 0 0 rgba(20,20,20,0.45);">€ 145</div>
<div style="left:191.40px;width:300px;text-align:right;top:399.00px;line-height:20px;font-size:10.0px;font-weight:400;color:#1E1E1E;white-space:nowrap;transform:scaleX(0.950);transform-origin:right center;text-shadow:0.35px 0 0 rgba(20,20,20,0.45);">€ 150</div>
<div style="left:248.30px;width:300px;text-align:right;top:399.00px;line-height:20px;font-size:10.0px;font-weight:400;color:#1E1E1E;white-space:nowrap;transform:scaleX(0.950);transform-origin:right center;text-shadow:0.35px 0 0 rgba(20,20,20,0.45);">€ 155</div>
<div style="left:305.20px;width:300px;text-align:right;top:399.00px;line-height:20px;font-size:10.0px;font-weight:400;color:#1E1E1E;white-space:nowrap;transform:scaleX(0.950);transform-origin:right center;text-shadow:0.35px 0 0 rgba(20,20,20,0.45);">€ 150</div>
<div style="left:362.10px;width:300px;text-align:right;top:399.00px;line-height:20px;font-size:10.0px;font-weight:400;color:#1E1E1E;white-space:nowrap;transform:scaleX(0.950);transform-origin:right center;text-shadow:0.35px 0 0 rgba(20,20,20,0.45);">€ 140</div>
<div style="left:419.00px;width:300px;text-align:right;top:399.00px;line-height:20px;font-size:10.0px;font-weight:400;color:#1E1E1E;white-space:nowrap;transform:scaleX(0.950);transform-origin:right center;text-shadow:0.35px 0 0 rgba(20,20,20,0.45);">€ 130</div>
<div style="left:21.40px;top:417.00px;line-height:20px;font-size:9.9px;font-weight:400;color:#1E1E1E;white-space:nowrap;transform:scaleX(0.950);transform-origin:left center;text-shadow:0.35px 0 0 rgba(20,20,20,0.45);">Gesundheit</div>
<div style="left:-93.10px;width:300px;text-align:right;top:417.00px;line-height:20px;font-size:10.0px;font-weight:400;color:#1E1E1E;white-space:nowrap;transform:scaleX(0.950);transform-origin:right center;text-shadow:0.35px 0 0 rgba(20,20,20,0.45);">€ 60</div>
<div style="left:-36.20px;width:300px;text-align:right;top:417.00px;line-height:20px;font-size:10.0px;font-weight:400;color:#1E1E1E;white-space:nowrap;transform:scaleX(0.950);transform-origin:right center;text-shadow:0.35px 0 0 rgba(20,20,20,0.45);">€ 40</div>
<div style="left:20.70px;width:300px;text-align:right;top:417.00px;line-height:20px;font-size:10.0px;font-weight:400;color:#1E1E1E;white-space:nowrap;transform:scaleX(0.950);transform-origin:right center;text-shadow:0.35px 0 0 rgba(20,20,20,0.45);">€ 65</div>
<div style="left:77.60px;width:300px;text-align:right;top:417.00px;line-height:20px;font-size:10.0px;font-weight:400;color:#1E1E1E;white-space:nowrap;transform:scaleX(0.950);transform-origin:right center;text-shadow:0.35px 0 0 rgba(20,20,20,0.45);">€ 45</div>
<div style="left:134.50px;width:300px;text-align:right;top:417.00px;line-height:20px;font-size:10.0px;font-weight:400;color:#1E1E1E;white-space:nowrap;transform:scaleX(0.950);transform-origin:right center;text-shadow:0.35px 0 0 rgba(20,20,20,0.45);">€ 55</div>
<div style="left:191.40px;width:300px;text-align:right;top:417.00px;line-height:20px;font-size:10.0px;font-weight:400;color:#1E1E1E;white-space:nowrap;transform:scaleX(0.950);transform-origin:right center;text-shadow:0.35px 0 0 rgba(20,20,20,0.45);">€ 50</div>
<div style="left:248.30px;width:300px;text-align:right;top:417.00px;line-height:20px;font-size:10.0px;font-weight:400;color:#1E1E1E;white-space:nowrap;transform:scaleX(0.950);transform-origin:right center;text-shadow:0.35px 0 0 rgba(20,20,20,0.45);">€ 60</div>
<div style="left:305.20px;width:300px;text-align:right;top:417.00px;line-height:20px;font-size:10.0px;font-weight:400;color:#1E1E1E;white-space:nowrap;transform:scaleX(0.950);transform-origin:right center;text-shadow:0.35px 0 0 rgba(20,20,20,0.45);">€ 45</div>
<div style="left:362.10px;width:300px;text-align:right;top:417.00px;line-height:20px;font-size:10.0px;font-weight:400;color:#1E1E1E;white-space:nowrap;transform:scaleX(0.950);transform-origin:right center;text-shadow:0.35px 0 0 rgba(20,20,20,0.45);">€ 50</div>
<div style="left:419.00px;width:300px;text-align:right;top:417.00px;line-height:20px;font-size:10.0px;font-weight:400;color:#1E1E1E;white-space:nowrap;transform:scaleX(0.950);transform-origin:right center;text-shadow:0.35px 0 0 rgba(20,20,20,0.45);">€ 40</div>
<div style="left:21.40px;top:435.00px;line-height:20px;font-size:9.9px;font-weight:400;color:#1E1E1E;white-space:nowrap;transform:scaleX(0.950);transform-origin:left center;text-shadow:0.35px 0 0 rgba(20,20,20,0.45);">Bildung</div>
<div style="left:-93.10px;width:300px;text-align:right;top:435.00px;line-height:20px;font-size:10.0px;font-weight:400;color:#1E1E1E;white-space:nowrap;transform:scaleX(0.950);transform-origin:right center;text-shadow:0.35px 0 0 rgba(20,20,20,0.45);">€ 40</div>
<div style="left:-36.20px;width:300px;text-align:right;top:435.00px;line-height:20px;font-size:10.0px;font-weight:400;color:#1E1E1E;white-space:nowrap;transform:scaleX(0.950);transform-origin:right center;text-shadow:0.35px 0 0 rgba(20,20,20,0.45);">€ 40</div>
<div style="left:20.70px;width:300px;text-align:right;top:435.00px;line-height:20px;font-size:10.0px;font-weight:400;color:#1E1E1E;white-space:nowrap;transform:scaleX(0.950);transform-origin:right center;text-shadow:0.35px 0 0 rgba(20,20,20,0.45);">€ 40</div>
<div style="left:77.60px;width:300px;text-align:right;top:435.00px;line-height:20px;font-size:10.0px;font-weight:400;color:#1E1E1E;white-space:nowrap;transform:scaleX(0.950);transform-origin:right center;text-shadow:0.35px 0 0 rgba(20,20,20,0.45);">€ 40</div>
<div style="left:134.50px;width:300px;text-align:right;top:435.00px;line-height:20px;font-size:10.0px;font-weight:400;color:#1E1E1E;white-space:nowrap;transform:scaleX(0.950);transform-origin:right center;text-shadow:0.35px 0 0 rgba(20,20,20,0.45);">€ 40</div>
<div style="left:191.40px;width:300px;text-align:right;top:435.00px;line-height:20px;font-size:10.0px;font-weight:400;color:#1E1E1E;white-space:nowrap;transform:scaleX(0.950);transform-origin:right center;text-shadow:0.35px 0 0 rgba(20,20,20,0.45);">€ 40</div>
<div style="left:248.30px;width:300px;text-align:right;top:435.00px;line-height:20px;font-size:10.0px;font-weight:400;color:#1E1E1E;white-space:nowrap;transform:scaleX(0.950);transform-origin:right center;text-shadow:0.35px 0 0 rgba(20,20,20,0.45);">€ 40</div>
<div style="left:305.20px;width:300px;text-align:right;top:435.00px;line-height:20px;font-size:10.0px;font-weight:400;color:#1E1E1E;white-space:nowrap;transform:scaleX(0.950);transform-origin:right center;text-shadow:0.35px 0 0 rgba(20,20,20,0.45);">€ 40</div>
<div style="left:362.10px;width:300px;text-align:right;top:435.00px;line-height:20px;font-size:10.0px;font-weight:400;color:#1E1E1E;white-space:nowrap;transform:scaleX(0.950);transform-origin:right center;text-shadow:0.35px 0 0 rgba(20,20,20,0.45);">€ 40</div>
<div style="left:419.00px;width:300px;text-align:right;top:435.00px;line-height:20px;font-size:10.0px;font-weight:400;color:#1E1E1E;white-space:nowrap;transform:scaleX(0.950);transform-origin:right center;text-shadow:0.35px 0 0 rgba(20,20,20,0.45);">€ 40</div>
<div style="left:21.40px;top:452.00px;line-height:20px;font-size:9.9px;font-weight:400;color:#1E1E1E;white-space:nowrap;transform:scaleX(0.950);transform-origin:left center;text-shadow:0.35px 0 0 rgba(20,20,20,0.45);">Freizeit</div>
<div style="left:-93.10px;width:300px;text-align:right;top:452.00px;line-height:20px;font-size:10.0px;font-weight:400;color:#1E1E1E;white-space:nowrap;transform:scaleX(0.950);transform-origin:right center;text-shadow:0.35px 0 0 rgba(20,20,20,0.45);">€ 160</div>
<div style="left:-36.20px;width:300px;text-align:right;top:452.00px;line-height:20px;font-size:10.0px;font-weight:400;color:#1E1E1E;white-space:nowrap;transform:scaleX(0.950);transform-origin:right center;text-shadow:0.35px 0 0 rgba(20,20,20,0.45);">€ 150</div>
<div style="left:20.70px;width:300px;text-align:right;top:452.00px;line-height:20px;font-size:10.0px;font-weight:400;color:#1E1E1E;white-space:nowrap;transform:scaleX(0.950);transform-origin:right center;text-shadow:0.35px 0 0 rgba(20,20,20,0.45);">€ 170</div>
<div style="left:77.60px;width:300px;text-align:right;top:452.00px;line-height:20px;font-size:10.0px;font-weight:400;color:#1E1E1E;white-space:nowrap;transform:scaleX(0.950);transform-origin:right center;text-shadow:0.35px 0 0 rgba(20,20,20,0.45);">€ 180</div>
<div style="left:134.50px;width:300px;text-align:right;top:452.00px;line-height:20px;font-size:10.0px;font-weight:400;color:#1E1E1E;white-space:nowrap;transform:scaleX(0.950);transform-origin:right center;text-shadow:0.35px 0 0 rgba(20,20,20,0.45);">€ 190</div>
<div style="left:191.40px;width:300px;text-align:right;top:452.00px;line-height:20px;font-size:10.0px;font-weight:400;color:#1E1E1E;white-space:nowrap;transform:scaleX(0.950);transform-origin:right center;text-shadow:0.35px 0 0 rgba(20,20,20,0.45);">€ 210</div>
<div style="left:248.30px;width:300px;text-align:right;top:452.00px;line-height:20px;font-size:10.0px;font-weight:400;color:#1E1E1E;white-space:nowrap;transform:scaleX(0.950);transform-origin:right center;text-shadow:0.35px 0 0 rgba(20,20,20,0.45);">€ 220</div>
<div style="left:305.20px;width:300px;text-align:right;top:452.00px;line-height:20px;font-size:10.0px;font-weight:400;color:#1E1E1E;white-space:nowrap;transform:scaleX(0.950);transform-origin:right center;text-shadow:0.35px 0 0 rgba(20,20,20,0.45);">€ 200</div>
<div style="left:362.10px;width:300px;text-align:right;top:452.00px;line-height:20px;font-size:10.0px;font-weight:400;color:#1E1E1E;white-space:nowrap;transform:scaleX(0.950);transform-origin:right center;text-shadow:0.35px 0 0 rgba(20,20,20,0.45);">€ 180</div>
<div style="left:419.00px;width:300px;text-align:right;top:452.00px;line-height:20px;font-size:10.0px;font-weight:400;color:#1E1E1E;white-space:nowrap;transform:scaleX(0.950);transform-origin:right center;text-shadow:0.35px 0 0 rgba(20,20,20,0.45);">€ 170</div>
<div style="left:21.40px;top:470.00px;line-height:20px;font-size:9.9px;font-weight:400;color:#1E1E1E;white-space:nowrap;transform:scaleX(0.950);transform-origin:left center;text-shadow:0.35px 0 0 rgba(20,20,20,0.45);">Kleidung/Schuhe</div>
<div style="left:-93.10px;width:300px;text-align:right;top:470.00px;line-height:20px;font-size:10.0px;font-weight:400;color:#1E1E1E;white-space:nowrap;transform:scaleX(0.950);transform-origin:right center;text-shadow:0.35px 0 0 rgba(20,20,20,0.45);">€ 80</div>
<div style="left:-36.20px;width:300px;text-align:right;top:470.00px;line-height:20px;font-size:10.0px;font-weight:400;color:#1E1E1E;white-space:nowrap;transform:scaleX(0.950);transform-origin:right center;text-shadow:0.35px 0 0 rgba(20,20,20,0.45);">€ 70</div>
<div style="left:20.70px;width:300px;text-align:right;top:470.00px;line-height:20px;font-size:10.0px;font-weight:400;color:#1E1E1E;white-space:nowrap;transform:scaleX(0.950);transform-origin:right center;text-shadow:0.35px 0 0 rgba(20,20,20,0.45);">€ 70</div>
<div style="left:77.60px;width:300px;text-align:right;top:470.00px;line-height:20px;font-size:10.0px;font-weight:400;color:#1E1E1E;white-space:nowrap;transform:scaleX(0.950);transform-origin:right center;text-shadow:0.35px 0 0 rgba(20,20,20,0.45);">€ 90</div>
<div style="left:134.50px;width:300px;text-align:right;top:470.00px;line-height:20px;font-size:10.0px;font-weight:400;color:#1E1E1E;white-space:nowrap;transform:scaleX(0.950);transform-origin:right center;text-shadow:0.35px 0 0 rgba(20,20,20,0.45);">€ 80</div>
<div style="left:191.40px;width:300px;text-align:right;top:470.00px;line-height:20px;font-size:10.0px;font-weight:400;color:#1E1E1E;white-space:nowrap;transform:scaleX(0.950);transform-origin:right center;text-shadow:0.35px 0 0 rgba(20,20,20,0.45);">€ 60</div>
<div style="left:248.30px;width:300px;text-align:right;top:470.00px;line-height:20px;font-size:10.0px;font-weight:400;color:#1E1E1E;white-space:nowrap;transform:scaleX(0.950);transform-origin:right center;text-shadow:0.35px 0 0 rgba(20,20,20,0.45);">€ 70</div>
<div style="left:305.20px;width:300px;text-align:right;top:470.00px;line-height:20px;font-size:10.0px;font-weight:400;color:#1E1E1E;white-space:nowrap;transform:scaleX(0.950);transform-origin:right center;text-shadow:0.35px 0 0 rgba(20,20,20,0.45);">€ 80</div>
<div style="left:362.10px;width:300px;text-align:right;top:470.00px;line-height:20px;font-size:10.0px;font-weight:400;color:#1E1E1E;white-space:nowrap;transform:scaleX(0.950);transform-origin:right center;text-shadow:0.35px 0 0 rgba(20,20,20,0.45);">€ 90</div>
<div style="left:419.00px;width:300px;text-align:right;top:470.00px;line-height:20px;font-size:10.0px;font-weight:400;color:#1E1E1E;white-space:nowrap;transform:scaleX(0.950);transform-origin:right center;text-shadow:0.35px 0 0 rgba(20,20,20,0.45);">€ 80</div>
<svg style="left:0;top:0" width="19" height="12"><polygon points="17.2,2.4 17.2,10.4 9.2,10.4" fill="#D2D2D2"/></svg>
<div style="left:19px;top:12px;width:730px;height:15px;border:2px solid #66A886;background:transparent"></div>
<div style="left:0.00px;top:476.50px;width:738.00px;height:23.50px;background:#E6E6E6;"></div>
<svg style="left:0;top:476px" width="60" height="24"><polyline points="23,8 19,11.5 23,15" fill="none" stroke="#8F8F8F" stroke-width="0.9"/><polyline points="43,8 47,11.5 43,15" fill="none" stroke="#8F8F8F" stroke-width="0.9"/><path d="M0 20.5L3.5 24" stroke="#3E8E62" stroke-width="1.6"/></svg>
<div style="left:144.6px;top:476.8px;width:55px;height:20px;background:#FFFFFF;border-radius:4px"></div>
<div style="left:150.7px;top:494.0px;width:43.3px;height:1.3px;background:#2E8B57"></div>
<div style="left:89.30px;top:479.00px;line-height:20px;font-size:10.2px;font-weight:400;color:#3C3C3C;white-space:nowrap;">Übersicht</div>
<div style="left:150.40px;top:477.00px;line-height:20px;font-size:10.3px;font-weight:700;color:#262626;white-space:nowrap;transform:scaleX(0.935);transform-origin:left center;">Eingaben</div>
<svg style="left:230px;top:480px" width="16" height="16"><path d="M4.2 8H12.5M8.35 3.9V12.1" stroke="#3A3A3A" stroke-width="1.05" fill="none"/></svg>
<svg style="left:0;top:0" width="738" height="500">
<polygon points="430.5,500 738,286 738,500" fill="#44545A"/>
<g fill="#FFFFFF" transform="translate(0,0.4)">
<rect x="592" y="415" width="58" height="13.5"/>
<rect x="592" y="441.8" width="13.7" height="40.4"/>
<rect x="592" y="441.8" width="52" height="13.9"/>
<rect x="592" y="468.7" width="58" height="13.5"/>
<polygon points="640.2,415 655.5,415 678,455.5 700,415 714,415 678.3,482"/>
<polygon points="678.5,415 693,415 656,482 641.6,482"/>
</g></svg>
</body></html>
